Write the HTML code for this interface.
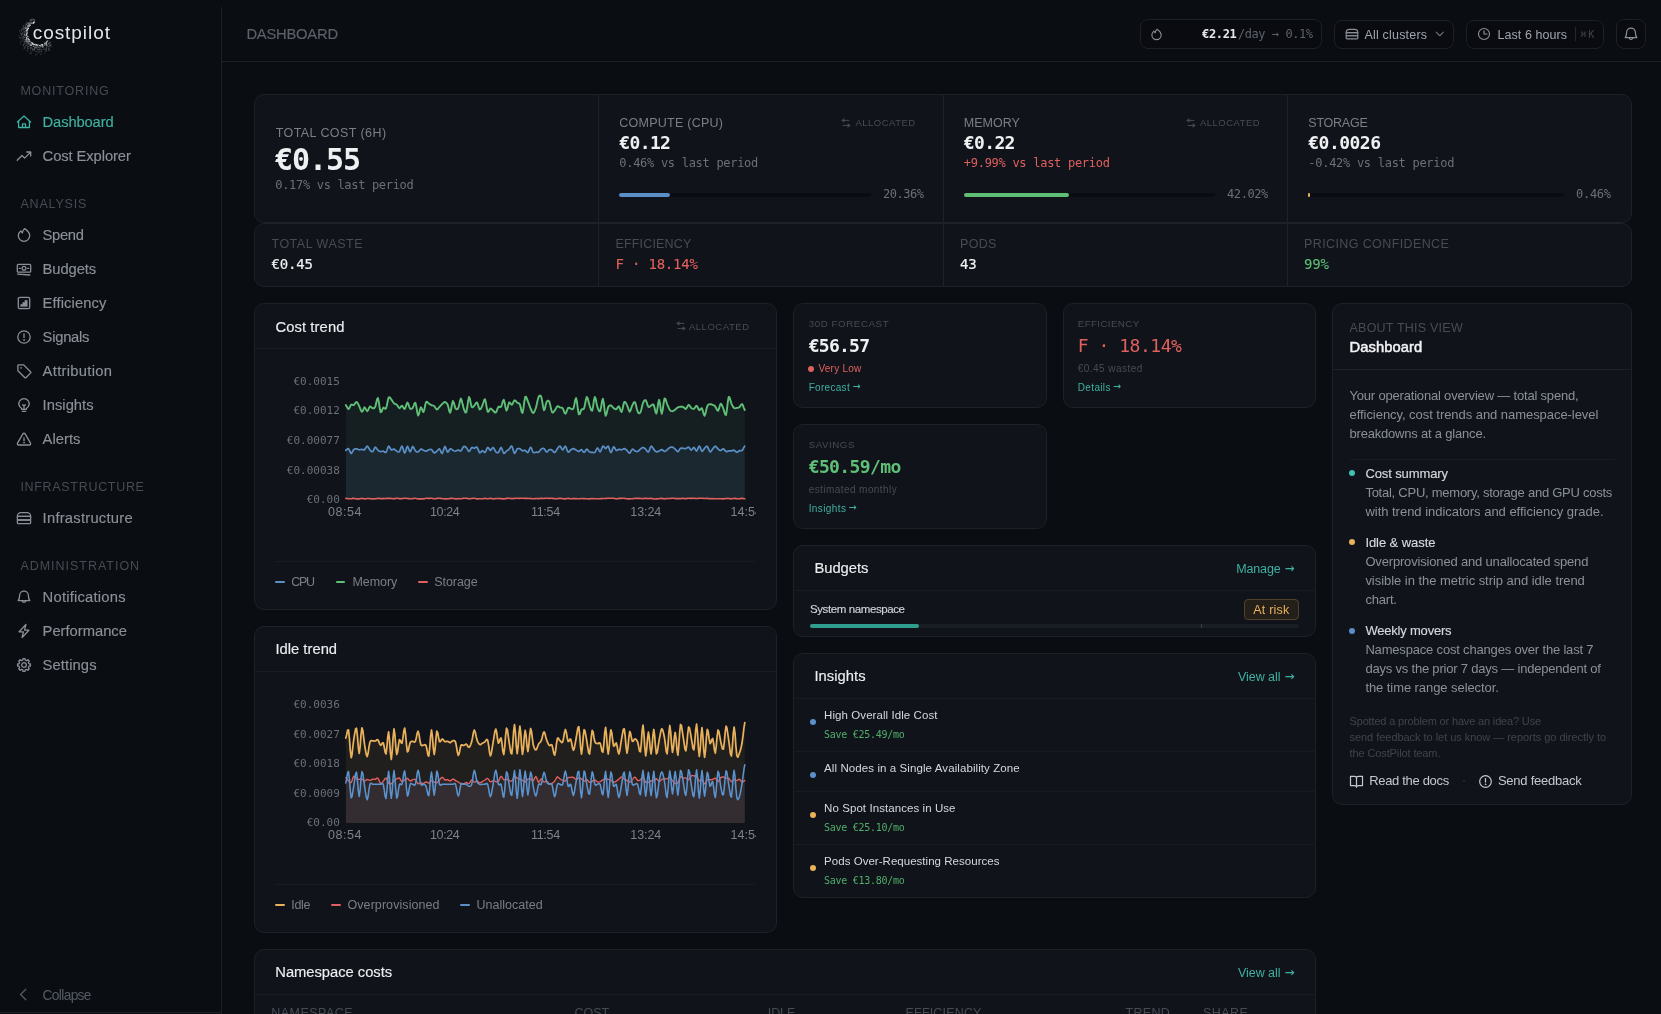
<!DOCTYPE html>
<html lang="en">
<head>
<meta charset="utf-8">
<title>CostPilot — Dashboard</title>
<style>
*{box-sizing:border-box;margin:0;padding:0}
html,body{width:1661px;height:1014px;overflow:hidden;background:#0a0d12;color:#e6e8eb;
  font-family:"Liberation Sans",sans-serif}
body{position:relative}
.m{font-family:"DejaVu Sans Mono","Liberation Mono",monospace}
#root{position:absolute;left:0;top:0;width:1661px;height:1014px;will-change:transform}
.abs{position:absolute}
.card{position:absolute;background:#10131a;border:1px solid #1d2128;border-radius:10px}
.t{position:absolute;white-space:nowrap;line-height:1}
.p{position:absolute;white-space:nowrap}
</style>
</head>
<body>
<div id="root">
<div class="abs" style="left:221px;top:7px;width:1px;height:1007px;background:#1c2027;"></div>
<div class="t" style="left:32.7px;top:23px;font-size:19px;color:#e4e6e9;letter-spacing:0.95px;">costpilot</div>
<div class="t" style="left:20.4px;top:85px;font-size:12.5px;color:#474c54;letter-spacing:0.82px;">MONITORING</div>
<div class="t" style="left:20.4px;top:198px;font-size:12.5px;color:#474c54;letter-spacing:0.83px;">ANALYSIS</div>
<div class="t" style="left:20.4px;top:481px;font-size:12.5px;color:#474c54;letter-spacing:0.69px;">INFRASTRUCTURE</div>
<div class="t" style="left:20.4px;top:560px;font-size:12.5px;color:#474c54;letter-spacing:0.98px;">ADMINISTRATION</div>
<div class="t" style="left:42.6px;top:115px;font-size:14.75px;color:#3fb0a1;letter-spacing:-0.14px;-webkit-text-stroke:0.15px #3fb0a1;">Dashboard</div>
<div class="t" style="left:42.6px;top:149px;font-size:14.75px;color:#8b9098;letter-spacing:-0.09px;-webkit-text-stroke:0.15px #8b9098;">Cost Explorer</div>
<div class="t" style="left:42.6px;top:228px;font-size:14.75px;color:#8b9098;letter-spacing:-0.34px;-webkit-text-stroke:0.15px #8b9098;">Spend</div>
<div class="t" style="left:42.6px;top:262px;font-size:14.75px;color:#8b9098;letter-spacing:-0.09px;-webkit-text-stroke:0.15px #8b9098;">Budgets</div>
<div class="t" style="left:42.6px;top:296px;font-size:14.75px;color:#8b9098;letter-spacing:0.11px;-webkit-text-stroke:0.15px #8b9098;">Efficiency</div>
<div class="t" style="left:42.6px;top:330px;font-size:14.75px;color:#8b9098;letter-spacing:-0.25px;-webkit-text-stroke:0.15px #8b9098;">Signals</div>
<div class="t" style="left:42.6px;top:364px;font-size:14.75px;color:#8b9098;letter-spacing:0.3px;-webkit-text-stroke:0.15px #8b9098;">Attribution</div>
<div class="t" style="left:42.6px;top:398px;font-size:14.75px;color:#8b9098;letter-spacing:0.02px;-webkit-text-stroke:0.15px #8b9098;">Insights</div>
<div class="t" style="left:42.6px;top:432px;font-size:14.75px;color:#8b9098;letter-spacing:0.04px;-webkit-text-stroke:0.15px #8b9098;">Alerts</div>
<div class="t" style="left:42.6px;top:511px;font-size:14.75px;color:#8b9098;letter-spacing:0.24px;-webkit-text-stroke:0.15px #8b9098;">Infrastructure</div>
<div class="t" style="left:42.6px;top:590px;font-size:14.75px;color:#8b9098;letter-spacing:0.22px;-webkit-text-stroke:0.15px #8b9098;">Notifications</div>
<div class="t" style="left:42.6px;top:624px;font-size:14.75px;color:#8b9098;letter-spacing:-0.01px;-webkit-text-stroke:0.15px #8b9098;">Performance</div>
<div class="t" style="left:42.6px;top:658px;font-size:14.75px;color:#8b9098;letter-spacing:0.09px;-webkit-text-stroke:0.15px #8b9098;">Settings</div>
<div class="t" style="left:42.6px;top:989px;font-size:13.75px;color:#565b63;letter-spacing:-0.66px;">Collapse</div>
<div class="abs" style="left:0px;top:1012px;width:221px;height:1px;background:#1c2027;"></div>
<div class="abs" style="left:222px;top:61px;width:1439px;height:1px;background:#1c2027;"></div>
<div class="t" style="left:246.4px;top:27px;font-size:14.75px;color:#5c6169;letter-spacing:-0.22px;-webkit-text-stroke:0.15px #5c6169;">DASHBOARD</div>
<div class="card" style="left:1140px;top:19px;width:182px;height:30px;background:#090b10;border-color:#1c2027;border-radius:8px"></div>
<div class="card" style="left:1334px;top:20px;width:120px;height:29px;background:#090b10;border-color:#1c2027;border-radius:8px"></div>
<div class="card" style="left:1466px;top:20px;width:138px;height:29px;background:#090b10;border-color:#1c2027;border-radius:8px"></div>
<div class="card" style="left:1616px;top:19px;width:30px;height:30px;background:#090b10;border-color:#1c2027;border-radius:8px"></div>
<div class="t m" style="left:1202.0px;top:28px;font-size:12px;color:#e6e8eb;font-weight:700;letter-spacing:-0.33px;">€2.21</div>
<div class="t m" style="left:1238.0px;top:28px;font-size:12px;color:#5c6169;letter-spacing:-0.45px;">/day → 0.1%</div>
<div class="t" style="left:1364.5px;top:29px;font-size:12.5px;color:#a0a5ad;letter-spacing:0.19px;">All clusters</div>
<div class="t" style="left:1497.5px;top:29px;font-size:12.5px;color:#a0a5ad;letter-spacing:0.06px;">Last 6 hours</div>
<div class="abs" style="left:1574.5px;top:27px;width:1px;height:14px;background:#23272e;"></div>
<div class="t m" style="left:1580.4px;top:30px;font-size:10px;color:#3f444c;letter-spacing:1.76px;">⌘K</div>
<div class="card" style="left:254px;top:94px;width:1378px;height:129px;"></div>
<div class="card" style="left:254px;top:223px;width:1378px;height:64px;"></div>
<div class="abs" style="left:598px;top:95px;width:1px;height:127px;background:#1d2128;"></div>
<div class="abs" style="left:598px;top:224px;width:1px;height:62px;background:#1d2128;"></div>
<div class="abs" style="left:943px;top:95px;width:1px;height:127px;background:#1d2128;"></div>
<div class="abs" style="left:943px;top:224px;width:1px;height:62px;background:#1d2128;"></div>
<div class="abs" style="left:1287px;top:95px;width:1px;height:127px;background:#1d2128;"></div>
<div class="abs" style="left:1287px;top:224px;width:1px;height:62px;background:#1d2128;"></div>
<div class="t" style="left:275.7px;top:127px;font-size:12.5px;color:#7a7f87;letter-spacing:0.43px;">TOTAL COST (6H)</div>
<div class="t m" style="left:275.0px;top:145px;font-size:30px;color:#eef0f2;font-weight:700;letter-spacing:-1.07px;">€0.55</div>
<div class="t m" style="left:275.3px;top:179px;font-size:12px;color:#6b7078;letter-spacing:-0.32px;">0.17% vs last period</div>
<div class="t" style="left:619.3px;top:117px;font-size:12.5px;color:#7a7f87;letter-spacing:0.25px;">COMPUTE (CPU)</div>
<div class="t m" style="left:619.3px;top:134px;font-size:18px;color:#eef0f2;font-weight:700;letter-spacing:-0.64px;">€0.12</div>
<div class="t m" style="left:619.3px;top:157px;font-size:12px;color:#6b7078;letter-spacing:-0.29px;">0.46% vs last period</div>
<div class="abs" style="left:619.3px;top:193px;width:251.6px;height:4px;border-radius:2px;background:#0a0c11"></div>
<div class="abs" style="left:619.3px;top:193px;width:51.2px;height:4px;border-radius:2px;background:#5b8fc7"></div>
<div class="t m" style="left:882.9px;top:188px;font-size:12px;color:#6b7078;letter-spacing:-0.45px;">20.36%</div>
<div class="t" style="left:855.5px;top:118px;font-size:9.5px;color:#474c54;letter-spacing:0.48px;">ALLOCATED</div>
<div class="t" style="left:963.8px;top:117px;font-size:12.5px;color:#7a7f87;">MEMORY</div>
<div class="t m" style="left:963.8px;top:134px;font-size:18px;color:#eef0f2;font-weight:700;letter-spacing:-0.64px;">€0.22</div>
<div class="t m" style="left:963.8px;top:157px;font-size:12px;color:#e0605e;letter-spacing:-0.28px;">+9.99% vs last period</div>
<div class="abs" style="left:963.8px;top:193px;width:251.3px;height:4px;border-radius:2px;background:#0a0c11"></div>
<div class="abs" style="left:963.8px;top:193px;width:105.6px;height:4px;border-radius:2px;background:#5fbf77"></div>
<div class="t m" style="left:1227.1px;top:188px;font-size:12px;color:#6b7078;letter-spacing:-0.45px;">42.02%</div>
<div class="t" style="left:1200.0px;top:118px;font-size:9.5px;color:#474c54;letter-spacing:0.48px;">ALLOCATED</div>
<div class="t" style="left:1308.3px;top:117px;font-size:12.5px;color:#7a7f87;letter-spacing:-0.23px;">STORAGE</div>
<div class="t m" style="left:1308.3px;top:134px;font-size:18px;color:#eef0f2;font-weight:700;letter-spacing:-0.53px;">€0.0026</div>
<div class="t m" style="left:1308.3px;top:157px;font-size:12px;color:#6b7078;letter-spacing:-0.28px;">-0.42% vs last period</div>
<div class="abs" style="left:1308.3px;top:193px;width:255.7px;height:4px;border-radius:2px;background:#0a0c11"></div>
<div class="abs" style="left:1308.3px;top:193px;width:1.5px;height:4px;border-radius:2px;background:#e8b15a"></div>
<div class="t m" style="left:1576.0px;top:188px;font-size:12px;color:#6b7078;letter-spacing:-0.28px;">0.46%</div>
<div class="t" style="left:271.5px;top:238px;font-size:12.5px;color:#474c54;letter-spacing:0.49px;">TOTAL WASTE</div>
<div class="t m" style="left:271.5px;top:257px;font-size:14px;color:#eef0f2;letter-spacing:-0.2px;-webkit-text-stroke:0.2px #eef0f2;">€0.45</div>
<div class="t" style="left:615.5px;top:238px;font-size:12.5px;color:#474c54;letter-spacing:0.17px;">EFFICIENCY</div>
<div class="t m" style="left:615.5px;top:257px;font-size:14px;color:#e0605e;letter-spacing:-0.2px;-webkit-text-stroke:0.1px #e0605e;">F · 18.14%</div>
<div class="t" style="left:960.0px;top:238px;font-size:12.5px;color:#474c54;letter-spacing:0.29px;">PODS</div>
<div class="t m" style="left:960.0px;top:257px;font-size:14px;color:#eef0f2;letter-spacing:-0.2px;-webkit-text-stroke:0.2px #eef0f2;">43</div>
<div class="t" style="left:1304.0px;top:238px;font-size:12.5px;color:#474c54;letter-spacing:0.39px;">PRICING CONFIDENCE</div>
<div class="t m" style="left:1304.0px;top:257px;font-size:14px;color:#5fbf77;letter-spacing:-0.2px;-webkit-text-stroke:0.1px #5fbf77;">99%</div>
<div class="card" style="left:254px;top:303px;width:523px;height:307px;"></div>
<div class="card" style="left:254px;top:626px;width:523px;height:307px;"></div>
<div class="card" style="left:793px;top:303px;width:254px;height:105px;"></div>
<div class="card" style="left:1063px;top:303px;width:253px;height:105px;"></div>
<div class="card" style="left:793px;top:424px;width:254px;height:105px;"></div>
<div class="card" style="left:793px;top:545px;width:523px;height:92px;"></div>
<div class="card" style="left:793px;top:653px;width:523px;height:245px;"></div>
<div class="card" style="left:1332px;top:303px;width:300px;height:502px;"></div>
<div class="card" style="left:254px;top:949px;width:1062px;height:80px;border-bottom-left-radius:0;border-bottom-right-radius:0"></div>
<svg class="abs" style="left:275px;top:360px;overflow:hidden" width="481" height="190" viewBox="275 360 481 190"><polygon fill="rgba(95,191,119,0.075)" points="345.8,405.0 346.7,406.4 347.6,408.2 348.5,409.1 349.4,408.0 350.3,406.1 351.2,404.6 352.0,404.5 352.9,405.0 353.8,405.1 354.7,404.0 355.6,402.6 356.5,401.9 357.4,402.7 358.3,404.3 359.2,406.1 360.1,408.3 361.0,410.6 361.9,411.8 362.8,410.8 363.7,408.6 364.5,407.3 365.4,408.3 366.3,410.2 367.2,411.2 368.1,410.1 369.0,408.0 369.9,406.5 370.8,406.7 371.7,407.6 372.6,408.2 373.5,408.3 374.4,408.0 375.3,406.8 376.1,403.6 377.0,399.5 377.9,398.0 378.8,401.7 379.7,408.0 380.6,412.2 381.5,411.9 382.4,409.4 383.3,407.6 384.2,408.0 385.1,408.9 386.0,408.5 386.9,405.2 387.8,400.6 388.6,397.5 389.5,397.1 390.4,398.2 391.3,399.4 392.2,400.7 393.1,402.1 394.0,403.3 394.9,403.8 395.8,404.1 396.7,404.6 397.6,405.8 398.5,407.3 399.4,408.2 400.2,407.6 401.1,406.3 402.0,405.7 402.9,406.7 403.8,408.4 404.7,409.0 405.6,407.1 406.5,404.2 407.4,402.6 408.3,403.9 409.2,406.6 410.1,408.6 411.0,409.0 411.9,408.6 412.7,407.8 413.6,405.8 414.5,403.3 415.4,402.7 416.3,406.4 417.2,412.2 418.1,415.5 419.0,413.8 419.9,409.8 420.8,407.2 421.7,408.4 422.6,411.0 423.5,412.0 424.4,409.4 425.2,405.1 426.1,402.1 427.0,401.7 427.9,402.6 428.8,403.5 429.7,404.1 430.6,404.7 431.5,405.2 432.4,405.4 433.3,405.6 434.2,406.0 435.1,407.2 436.0,408.7 436.8,409.5 437.7,409.1 438.6,408.0 439.5,406.9 440.4,405.9 441.3,404.9 442.2,404.0 443.1,403.1 444.0,402.3 444.9,402.0 445.8,402.3 446.7,403.2 447.6,404.6 448.5,407.6 449.3,411.2 450.2,412.7 451.1,409.6 452.0,404.2 452.9,401.0 453.8,402.4 454.7,405.9 455.6,408.6 456.5,409.3 457.4,409.1 458.3,408.0 459.2,404.8 460.1,400.6 460.9,398.6 461.8,400.6 462.7,404.6 463.6,408.1 464.5,410.6 465.4,412.6 466.3,412.4 467.2,407.8 468.1,400.9 469.0,396.9 469.9,398.8 470.8,403.5 471.7,406.9 472.6,407.4 473.4,406.6 474.3,405.6 475.2,404.3 476.1,402.8 477.0,402.4 477.9,404.4 478.8,407.6 479.7,409.5 480.6,409.1 481.5,407.3 482.4,405.3 483.3,402.8 484.2,400.0 485.0,399.2 485.9,402.6 486.8,408.1 487.7,411.8 488.6,411.7 489.5,409.8 490.4,408.5 491.3,408.8 492.2,409.7 493.1,410.5 494.0,411.5 494.9,412.5 495.8,412.6 496.7,411.0 497.5,408.6 498.4,406.8 499.3,406.7 500.2,407.1 501.1,406.8 502.0,404.3 502.9,401.0 503.8,399.8 504.7,402.8 505.6,407.8 506.5,410.6 507.4,408.9 508.3,405.1 509.1,402.4 510.0,402.7 510.9,404.1 511.8,404.8 512.7,403.6 513.6,401.6 514.5,400.3 515.4,400.6 516.3,401.7 517.2,402.7 518.1,403.1 519.0,403.3 519.9,404.4 520.8,407.7 521.6,411.7 522.5,413.1 523.4,408.7 524.3,401.7 525.2,396.9 526.1,396.8 527.0,398.9 527.9,401.4 528.8,403.6 529.7,406.2 530.6,408.5 531.5,410.5 532.4,412.3 533.2,413.0 534.1,412.2 535.0,410.3 535.9,407.8 536.8,404.2 537.7,399.9 538.6,396.9 539.5,395.6 540.4,395.5 541.3,396.9 542.2,401.1 543.1,406.9 544.0,410.2 544.9,408.7 545.7,404.8 546.6,401.9 547.5,400.8 548.4,400.6 549.3,401.6 550.2,404.8 551.1,409.1 552.0,412.1 552.9,412.6 553.8,411.7 554.7,410.6 555.6,409.1 556.5,407.4 557.4,406.2 558.2,406.3 559.1,406.9 560.0,407.5 560.9,407.6 561.8,407.6 562.7,408.2 563.6,410.1 564.5,412.6 565.4,413.8 566.3,412.4 567.2,409.8 568.1,407.9 569.0,407.6 569.8,408.1 570.7,408.6 571.6,409.0 572.5,409.4 573.4,408.6 574.3,404.9 575.2,400.0 576.1,398.1 577.0,402.3 577.9,409.5 578.8,414.3 579.7,414.1 580.6,411.6 581.5,409.4 582.3,409.2 583.2,409.3 584.1,408.3 585.0,404.5 585.9,399.6 586.8,396.9 587.7,398.3 588.6,401.9 589.5,405.2 590.4,407.9 591.3,410.4 592.2,410.7 593.1,406.6 593.9,400.4 594.8,396.9 595.7,398.8 596.6,403.5 597.5,407.4 598.4,409.7 599.3,411.3 600.2,411.1 601.1,407.1 602.0,401.4 602.9,398.8 603.8,403.2 604.7,410.9 605.6,415.7 606.4,414.5 607.3,410.4 608.2,407.1 609.1,405.9 610.0,405.4 610.9,405.4 611.8,406.0 612.7,407.1 613.6,408.1 614.5,408.7 615.4,409.2 616.3,409.2 617.2,408.2 618.0,406.8 618.9,406.3 619.8,408.2 620.7,410.9 621.6,412.0 622.5,409.3 623.4,404.8 624.3,401.9 625.2,401.9 626.1,403.3 627.0,405.1 627.9,407.5 628.8,410.3 629.7,411.7 630.5,410.4 631.4,407.7 632.3,405.4 633.2,403.6 634.1,402.1 635.0,402.1 635.9,404.7 636.8,408.8 637.7,411.8 638.6,413.1 639.5,413.3 640.4,412.4 641.3,409.8 642.1,405.9 643.0,402.9 643.9,401.1 644.8,400.1 645.7,400.2 646.6,402.0 647.5,404.9 648.4,406.9 649.3,407.0 650.2,406.2 651.1,405.5 652.0,404.9 652.9,404.4 653.8,405.0 654.6,408.0 655.5,412.0 656.4,413.5 657.3,409.6 658.2,403.1 659.1,399.8 660.0,403.5 660.9,410.3 661.8,413.8 662.7,410.1 663.6,403.2 664.5,398.5 665.4,398.8 666.2,401.3 667.1,404.0 668.0,406.1 668.9,408.2 669.8,409.9 670.7,410.8 671.6,411.1 672.5,411.2 673.4,410.9 674.3,410.3 675.2,409.6 676.1,408.8 677.0,408.0 677.9,407.4 678.7,407.0 679.6,406.9 680.5,406.8 681.4,406.7 682.3,406.7 683.2,407.0 684.1,407.7 685.0,408.7 685.9,409.0 686.8,407.8 687.7,406.0 688.6,404.9 689.5,405.5 690.4,406.8 691.2,408.0 692.1,408.5 693.0,408.9 693.9,408.8 694.8,407.8 695.7,406.4 696.6,405.8 697.5,406.9 698.4,408.9 699.3,410.2 700.2,409.7 701.1,408.5 702.0,408.3 702.8,410.7 703.7,414.2 704.6,415.7 705.5,413.4 706.4,409.3 707.3,406.0 708.2,404.7 709.1,404.4 710.0,404.2 710.9,404.2 711.8,404.5 712.7,404.9 713.6,405.2 714.5,405.7 715.3,406.5 716.2,408.2 717.1,410.1 718.0,410.8 718.9,408.9 719.8,405.6 720.7,403.7 721.6,404.5 722.5,406.5 723.4,408.7 724.3,411.6 725.2,414.6 726.1,414.9 726.9,409.8 727.8,402.0 728.7,396.9 729.6,397.4 730.5,400.6 731.4,403.6 732.3,405.4 733.2,407.0 734.1,408.0 735.0,408.4 735.9,408.2 736.8,407.9 737.7,407.8 738.6,407.6 739.4,407.2 740.3,405.9 741.2,404.5 742.1,404.0 743.0,405.5 743.9,408.1 744.8,410.0 744.8,499.3 345.8,499.3"/><polygon fill="rgba(91,143,199,0.085)" points="345.8,450.3 346.7,449.7 347.6,448.8 348.5,448.7 349.4,450.1 350.3,452.3 351.2,453.5 352.0,452.7 352.9,450.9 353.8,449.5 354.7,449.0 355.6,448.8 356.5,448.8 357.4,449.0 358.3,449.5 359.2,449.8 360.1,449.7 361.0,449.5 361.9,449.4 362.8,449.6 363.7,449.9 364.5,449.8 365.4,448.6 366.3,446.9 367.2,446.1 368.1,446.9 369.0,448.5 369.9,449.9 370.8,450.9 371.7,451.7 372.6,451.7 373.5,450.4 374.4,448.3 375.3,447.1 376.1,447.7 377.0,449.0 377.9,450.2 378.8,450.9 379.7,451.3 380.6,451.6 381.5,451.5 382.4,451.2 383.3,451.1 384.2,451.7 385.1,452.5 386.0,452.4 386.9,450.5 387.8,447.7 388.6,446.1 389.5,446.8 390.4,448.6 391.3,449.9 392.2,449.9 393.1,449.3 394.0,449.1 394.9,449.6 395.8,450.5 396.7,451.1 397.6,451.7 398.5,452.0 399.4,451.7 400.2,449.8 401.1,447.3 402.0,446.1 402.9,448.0 403.8,451.3 404.7,453.0 405.6,451.4 406.5,448.2 407.4,446.3 408.3,447.7 409.2,450.3 410.1,451.8 411.0,450.5 411.9,448.0 412.7,446.5 413.6,447.3 414.5,449.2 415.4,450.8 416.3,451.6 417.2,452.0 418.1,451.9 419.0,451.1 419.9,449.9 420.8,449.1 421.7,449.2 422.6,449.8 423.5,450.3 424.4,450.7 425.2,451.1 426.1,451.2 427.0,450.9 427.9,450.3 428.8,449.8 429.7,449.5 430.6,449.4 431.5,449.6 432.4,450.6 433.3,452.0 434.2,452.8 435.1,452.7 436.0,452.0 436.8,451.2 437.7,450.3 438.6,449.2 439.5,448.9 440.4,450.4 441.3,452.6 442.2,453.5 443.1,451.5 444.0,448.3 444.9,446.5 445.8,447.8 446.7,450.5 447.6,452.2 448.5,451.6 449.3,449.9 450.2,448.8 451.1,448.9 452.0,449.6 452.9,450.3 453.8,450.7 454.7,451.0 455.6,451.1 456.5,450.8 457.4,450.3 458.3,450.0 459.2,450.4 460.1,451.0 460.9,451.0 461.8,449.7 462.7,447.9 463.6,446.6 464.5,446.4 465.4,446.8 466.3,447.5 467.2,448.9 468.1,450.6 469.0,451.5 469.9,450.6 470.8,448.8 471.7,447.6 472.6,447.5 473.4,448.0 474.3,448.2 475.2,447.8 476.1,447.2 477.0,447.2 477.9,448.9 478.8,451.3 479.7,452.8 480.6,452.5 481.5,451.4 482.4,450.7 483.3,451.2 484.2,452.2 485.0,452.5 485.9,451.0 486.8,448.8 487.7,447.4 488.6,448.0 489.5,449.5 490.4,450.3 491.3,449.5 492.2,448.1 493.1,447.5 494.0,448.5 494.9,450.3 495.8,451.8 496.7,452.5 497.5,452.8 498.4,452.5 499.3,450.9 500.2,448.6 501.1,447.5 502.0,448.9 502.9,451.6 503.8,453.3 504.7,453.1 505.6,452.0 506.5,451.0 507.4,450.4 508.3,449.9 509.1,449.2 510.0,447.9 510.9,446.4 511.8,446.1 512.7,448.2 513.6,451.4 514.5,453.3 515.4,452.5 516.3,450.5 517.2,448.9 518.1,448.5 519.0,448.5 519.9,448.8 520.8,449.4 521.6,450.2 522.5,450.8 523.4,450.7 524.3,450.4 525.2,450.4 526.1,451.2 527.0,452.3 527.9,452.6 528.8,451.0 529.7,448.5 530.6,447.3 531.5,448.4 532.4,450.8 533.2,452.5 534.1,452.8 535.0,452.5 535.9,452.2 536.8,452.2 537.7,452.4 538.6,452.2 539.5,451.2 540.4,450.0 541.3,449.0 542.2,448.5 543.1,448.3 544.0,448.5 544.9,449.6 545.7,451.2 546.6,452.0 547.5,451.6 548.4,450.4 549.3,449.6 550.2,449.5 551.1,449.7 552.0,450.1 552.9,451.0 553.8,452.1 554.7,452.5 555.6,451.7 556.5,450.1 557.4,448.7 558.2,447.5 559.1,446.5 560.0,446.1 560.9,447.2 561.8,449.0 562.7,449.9 563.6,448.9 564.5,447.0 565.4,446.2 566.3,447.7 567.2,450.4 568.1,452.1 569.0,452.0 569.8,450.9 570.7,450.0 571.6,449.3 572.5,448.8 573.4,448.6 574.3,448.9 575.2,449.4 576.1,450.0 577.0,450.6 577.9,451.2 578.8,451.4 579.7,450.9 580.6,450.0 581.5,449.6 582.3,450.5 583.2,451.8 584.1,452.4 585.0,451.6 585.9,450.0 586.8,449.2 587.7,449.7 588.6,451.0 589.5,452.0 590.4,452.2 591.3,452.3 592.2,452.3 593.1,452.5 593.9,452.7 594.8,452.4 595.7,451.0 596.6,449.0 597.5,448.0 598.4,449.0 599.3,451.0 600.2,451.9 601.1,450.4 602.0,447.8 602.9,446.1 603.8,446.5 604.7,447.7 605.6,448.5 606.4,447.8 607.3,446.5 608.2,446.2 609.1,448.2 610.0,451.1 610.9,452.6 611.8,451.2 612.7,448.5 613.6,446.8 614.5,447.5 615.4,449.2 616.3,450.4 617.2,450.3 618.0,449.7 618.9,449.3 619.8,449.4 620.7,449.7 621.6,449.8 622.5,449.5 623.4,448.9 624.3,448.6 625.2,449.0 626.1,449.7 627.0,450.5 627.9,451.6 628.8,452.7 629.7,453.2 630.5,452.1 631.4,450.4 632.3,449.2 633.2,449.4 634.1,450.2 635.0,451.0 635.9,451.3 636.8,451.6 637.7,451.5 638.6,450.9 639.5,449.9 640.4,449.1 641.3,448.4 642.1,447.7 643.0,447.5 643.9,447.8 644.8,448.4 645.7,449.2 646.6,450.4 647.5,451.7 648.4,452.0 649.3,450.4 650.2,447.8 651.1,446.2 652.0,446.6 652.9,448.0 653.8,449.4 654.6,450.4 655.5,451.3 656.4,451.8 657.3,451.8 658.2,451.4 659.1,450.9 660.0,450.4 660.9,449.8 661.8,449.6 662.7,450.1 663.6,450.9 664.5,451.4 665.4,451.2 666.2,450.5 667.1,449.8 668.0,449.0 668.9,448.1 669.8,447.5 670.7,447.2 671.6,447.1 672.5,447.2 673.4,447.6 674.3,448.3 675.2,449.1 676.1,450.1 677.0,451.3 677.9,451.7 678.7,450.9 679.6,449.4 680.5,448.3 681.4,448.1 682.3,448.2 683.2,448.3 684.1,448.5 685.0,448.6 685.9,448.6 686.8,448.0 687.7,447.3 688.6,447.1 689.5,448.0 690.4,449.4 691.2,450.1 692.1,449.4 693.0,448.1 693.9,447.4 694.8,448.5 695.7,450.2 696.6,451.0 697.5,449.6 698.4,447.3 699.3,446.1 700.2,447.4 701.1,449.9 702.0,451.4 702.8,450.9 703.7,449.5 704.6,448.2 705.5,447.2 706.4,446.4 707.3,446.3 708.2,448.0 709.1,450.4 710.0,451.9 710.9,451.5 711.8,450.2 712.7,448.8 713.6,447.7 714.5,446.6 715.3,446.1 716.2,446.7 717.1,447.9 718.0,448.9 718.9,449.7 719.8,450.3 720.7,450.5 721.6,450.0 722.5,449.1 723.4,448.8 724.3,449.5 725.2,450.7 726.1,451.5 726.9,451.6 727.8,451.2 728.7,450.9 729.6,450.9 730.5,450.9 731.4,450.9 732.3,450.6 733.2,450.3 734.1,450.2 735.0,450.9 735.9,451.8 736.8,452.3 737.7,452.0 738.6,451.2 739.4,450.6 740.3,450.6 741.2,450.8 742.1,450.5 743.0,449.2 743.9,447.4 744.8,446.1 744.8,499.3 345.8,499.3"/><polygon fill="rgba(224,96,94,0.1)" points="345.8,498.4 346.7,498.5 347.6,498.6 348.5,498.8 349.4,498.8 350.3,498.8 351.2,498.7 352.0,498.6 352.9,498.4 353.8,498.4 354.7,498.5 355.6,498.7 356.5,498.9 357.4,498.9 358.3,499.0 359.2,498.9 360.1,498.8 361.0,498.5 361.9,498.4 362.8,498.5 363.7,498.8 364.5,498.9 365.4,498.8 366.3,498.7 367.2,498.5 368.1,498.5 369.0,498.5 369.9,498.6 370.8,498.7 371.7,498.8 372.6,498.9 373.5,499.0 374.4,498.9 375.3,498.8 376.1,498.7 377.0,498.5 377.9,498.4 378.8,498.4 379.7,498.5 380.6,498.6 381.5,498.6 382.4,498.6 383.3,498.6 384.2,498.6 385.1,498.5 386.0,498.5 386.9,498.4 387.8,498.4 388.6,498.4 389.5,498.4 390.4,498.4 391.3,498.5 392.2,498.6 393.1,498.7 394.0,498.8 394.9,498.6 395.8,498.4 396.7,498.3 397.6,498.3 398.5,498.5 399.4,498.6 400.2,498.7 401.1,498.6 402.0,498.6 402.9,498.5 403.8,498.3 404.7,498.3 405.6,498.3 406.5,498.4 407.4,498.5 408.3,498.6 409.2,498.6 410.1,498.7 411.0,498.7 411.9,498.7 412.7,498.6 413.6,498.5 414.5,498.3 415.4,498.3 416.3,498.5 417.2,498.7 418.1,498.9 419.0,498.9 419.9,498.9 420.8,498.8 421.7,498.9 422.6,498.9 423.5,498.9 424.4,498.8 425.2,498.5 426.1,498.3 427.0,498.3 427.9,498.4 428.8,498.4 429.7,498.4 430.6,498.3 431.5,498.3 432.4,498.4 433.3,498.7 434.2,498.8 435.1,498.7 436.0,498.6 436.8,498.4 437.7,498.4 438.6,498.3 439.5,498.3 440.4,498.4 441.3,498.5 442.2,498.5 443.1,498.7 444.0,498.8 444.9,498.9 445.8,498.9 446.7,498.9 447.6,498.8 448.5,498.7 449.3,498.6 450.2,498.4 451.1,498.4 452.0,498.3 452.9,498.4 453.8,498.5 454.7,498.7 455.6,498.9 456.5,498.9 457.4,498.7 458.3,498.6 459.2,498.7 460.1,498.7 460.9,498.7 461.8,498.6 462.7,498.4 463.6,498.3 464.5,498.3 465.4,498.2 466.3,498.3 467.2,498.4 468.1,498.6 469.0,498.7 469.9,498.7 470.8,498.6 471.7,498.5 472.6,498.4 473.4,498.3 474.3,498.3 475.2,498.5 476.1,498.7 477.0,498.9 477.9,498.9 478.8,498.8 479.7,498.7 480.6,498.7 481.5,498.8 482.4,498.8 483.3,498.7 484.2,498.4 485.0,498.3 485.9,498.5 486.8,498.7 487.7,498.8 488.6,498.7 489.5,498.4 490.4,498.3 491.3,498.4 492.2,498.7 493.1,498.9 494.0,498.8 494.9,498.7 495.8,498.6 496.7,498.5 497.5,498.5 498.4,498.5 499.3,498.5 500.2,498.6 501.1,498.6 502.0,498.7 502.9,498.9 503.8,498.9 504.7,498.8 505.6,498.6 506.5,498.4 507.4,498.4 508.3,498.3 509.1,498.3 510.0,498.4 510.9,498.5 511.8,498.6 512.7,498.6 513.6,498.5 514.5,498.4 515.4,498.4 516.3,498.3 517.2,498.3 518.1,498.3 519.0,498.4 519.9,498.4 520.8,498.3 521.6,498.3 522.5,498.3 523.4,498.3 524.3,498.4 525.2,498.4 526.1,498.4 527.0,498.4 527.9,498.5 528.8,498.5 529.7,498.4 530.6,498.5 531.5,498.6 532.4,498.7 533.2,498.8 534.1,498.7 535.0,498.6 535.9,498.5 536.8,498.5 537.7,498.6 538.6,498.6 539.5,498.5 540.4,498.4 541.3,498.4 542.2,498.4 543.1,498.5 544.0,498.5 544.9,498.4 545.7,498.3 546.6,498.3 547.5,498.3 548.4,498.4 549.3,498.4 550.2,498.4 551.1,498.3 552.0,498.3 552.9,498.4 553.8,498.6 554.7,498.8 555.6,498.8 556.5,498.7 557.4,498.6 558.2,498.5 559.1,498.4 560.0,498.4 560.9,498.4 561.8,498.5 562.7,498.6 563.6,498.7 564.5,498.9 565.4,498.9 566.3,498.7 567.2,498.5 568.1,498.3 569.0,498.4 569.8,498.7 570.7,498.8 571.6,498.8 572.5,498.6 573.4,498.6 574.3,498.5 575.2,498.6 576.1,498.6 577.0,498.7 577.9,498.8 578.8,498.8 579.7,498.8 580.6,498.6 581.5,498.5 582.3,498.5 583.2,498.6 584.1,498.6 585.0,498.6 585.9,498.7 586.8,498.7 587.7,498.8 588.6,498.9 589.5,498.9 590.4,498.8 591.3,498.6 592.2,498.5 593.1,498.6 593.9,498.7 594.8,498.8 595.7,498.8 596.6,498.8 597.5,498.7 598.4,498.7 599.3,498.7 600.2,498.7 601.1,498.6 602.0,498.6 602.9,498.5 603.8,498.5 604.7,498.5 605.6,498.5 606.4,498.4 607.3,498.3 608.2,498.3 609.1,498.3 610.0,498.3 610.9,498.3 611.8,498.3 612.7,498.3 613.6,498.3 614.5,498.4 615.4,498.7 616.3,498.8 617.2,498.7 618.0,498.6 618.9,498.4 619.8,498.4 620.7,498.4 621.6,498.4 622.5,498.3 623.4,498.3 624.3,498.3 625.2,498.5 626.1,498.7 627.0,498.8 627.9,498.9 628.8,498.9 629.7,498.9 630.5,498.8 631.4,498.8 632.3,498.7 633.2,498.6 634.1,498.5 635.0,498.4 635.9,498.4 636.8,498.4 637.7,498.4 638.6,498.4 639.5,498.4 640.4,498.5 641.3,498.5 642.1,498.6 643.0,498.6 643.9,498.5 644.8,498.4 645.7,498.4 646.6,498.4 647.5,498.5 648.4,498.6 649.3,498.5 650.2,498.4 651.1,498.4 652.0,498.6 652.9,498.8 653.8,498.9 654.6,499.0 655.5,499.0 656.4,498.9 657.3,498.9 658.2,498.7 659.1,498.6 660.0,498.5 660.9,498.4 661.8,498.4 662.7,498.6 663.6,498.8 664.5,498.9 665.4,498.8 666.2,498.6 667.1,498.5 668.0,498.5 668.9,498.5 669.8,498.5 670.7,498.4 671.6,498.3 672.5,498.3 673.4,498.3 674.3,498.4 675.2,498.5 676.1,498.6 677.0,498.6 677.9,498.6 678.7,498.6 679.6,498.6 680.5,498.6 681.4,498.5 682.3,498.4 683.2,498.4 684.1,498.5 685.0,498.6 685.9,498.6 686.8,498.5 687.7,498.4 688.6,498.3 689.5,498.3 690.4,498.4 691.2,498.4 692.1,498.4 693.0,498.3 693.9,498.3 694.8,498.4 695.7,498.5 696.6,498.5 697.5,498.5 698.4,498.4 699.3,498.3 700.2,498.2 701.1,498.2 702.0,498.3 702.8,498.3 703.7,498.4 704.6,498.5 705.5,498.5 706.4,498.4 707.3,498.4 708.2,498.5 709.1,498.6 710.0,498.7 710.9,498.7 711.8,498.6 712.7,498.6 713.6,498.7 714.5,498.7 715.3,498.8 716.2,498.8 717.1,498.7 718.0,498.7 718.9,498.7 719.8,498.7 720.7,498.8 721.6,498.8 722.5,498.9 723.4,498.9 724.3,498.8 725.2,498.6 726.1,498.5 726.9,498.5 727.8,498.4 728.7,498.5 729.6,498.6 730.5,498.8 731.4,498.9 732.3,498.8 733.2,498.5 734.1,498.4 735.0,498.4 735.9,498.6 736.8,498.8 737.7,498.8 738.6,498.8 739.4,498.7 740.3,498.6 741.2,498.4 742.1,498.3 743.0,498.4 743.9,498.7 744.8,498.8 744.8,499.3 345.8,499.3"/><polyline fill="none" stroke="#5fbf77" stroke-width="1.9" stroke-linejoin="round" stroke-linecap="round" points="345.8,405.0 346.7,406.4 347.6,408.2 348.5,409.1 349.4,408.0 350.3,406.1 351.2,404.6 352.0,404.5 352.9,405.0 353.8,405.1 354.7,404.0 355.6,402.6 356.5,401.9 357.4,402.7 358.3,404.3 359.2,406.1 360.1,408.3 361.0,410.6 361.9,411.8 362.8,410.8 363.7,408.6 364.5,407.3 365.4,408.3 366.3,410.2 367.2,411.2 368.1,410.1 369.0,408.0 369.9,406.5 370.8,406.7 371.7,407.6 372.6,408.2 373.5,408.3 374.4,408.0 375.3,406.8 376.1,403.6 377.0,399.5 377.9,398.0 378.8,401.7 379.7,408.0 380.6,412.2 381.5,411.9 382.4,409.4 383.3,407.6 384.2,408.0 385.1,408.9 386.0,408.5 386.9,405.2 387.8,400.6 388.6,397.5 389.5,397.1 390.4,398.2 391.3,399.4 392.2,400.7 393.1,402.1 394.0,403.3 394.9,403.8 395.8,404.1 396.7,404.6 397.6,405.8 398.5,407.3 399.4,408.2 400.2,407.6 401.1,406.3 402.0,405.7 402.9,406.7 403.8,408.4 404.7,409.0 405.6,407.1 406.5,404.2 407.4,402.6 408.3,403.9 409.2,406.6 410.1,408.6 411.0,409.0 411.9,408.6 412.7,407.8 413.6,405.8 414.5,403.3 415.4,402.7 416.3,406.4 417.2,412.2 418.1,415.5 419.0,413.8 419.9,409.8 420.8,407.2 421.7,408.4 422.6,411.0 423.5,412.0 424.4,409.4 425.2,405.1 426.1,402.1 427.0,401.7 427.9,402.6 428.8,403.5 429.7,404.1 430.6,404.7 431.5,405.2 432.4,405.4 433.3,405.6 434.2,406.0 435.1,407.2 436.0,408.7 436.8,409.5 437.7,409.1 438.6,408.0 439.5,406.9 440.4,405.9 441.3,404.9 442.2,404.0 443.1,403.1 444.0,402.3 444.9,402.0 445.8,402.3 446.7,403.2 447.6,404.6 448.5,407.6 449.3,411.2 450.2,412.7 451.1,409.6 452.0,404.2 452.9,401.0 453.8,402.4 454.7,405.9 455.6,408.6 456.5,409.3 457.4,409.1 458.3,408.0 459.2,404.8 460.1,400.6 460.9,398.6 461.8,400.6 462.7,404.6 463.6,408.1 464.5,410.6 465.4,412.6 466.3,412.4 467.2,407.8 468.1,400.9 469.0,396.9 469.9,398.8 470.8,403.5 471.7,406.9 472.6,407.4 473.4,406.6 474.3,405.6 475.2,404.3 476.1,402.8 477.0,402.4 477.9,404.4 478.8,407.6 479.7,409.5 480.6,409.1 481.5,407.3 482.4,405.3 483.3,402.8 484.2,400.0 485.0,399.2 485.9,402.6 486.8,408.1 487.7,411.8 488.6,411.7 489.5,409.8 490.4,408.5 491.3,408.8 492.2,409.7 493.1,410.5 494.0,411.5 494.9,412.5 495.8,412.6 496.7,411.0 497.5,408.6 498.4,406.8 499.3,406.7 500.2,407.1 501.1,406.8 502.0,404.3 502.9,401.0 503.8,399.8 504.7,402.8 505.6,407.8 506.5,410.6 507.4,408.9 508.3,405.1 509.1,402.4 510.0,402.7 510.9,404.1 511.8,404.8 512.7,403.6 513.6,401.6 514.5,400.3 515.4,400.6 516.3,401.7 517.2,402.7 518.1,403.1 519.0,403.3 519.9,404.4 520.8,407.7 521.6,411.7 522.5,413.1 523.4,408.7 524.3,401.7 525.2,396.9 526.1,396.8 527.0,398.9 527.9,401.4 528.8,403.6 529.7,406.2 530.6,408.5 531.5,410.5 532.4,412.3 533.2,413.0 534.1,412.2 535.0,410.3 535.9,407.8 536.8,404.2 537.7,399.9 538.6,396.9 539.5,395.6 540.4,395.5 541.3,396.9 542.2,401.1 543.1,406.9 544.0,410.2 544.9,408.7 545.7,404.8 546.6,401.9 547.5,400.8 548.4,400.6 549.3,401.6 550.2,404.8 551.1,409.1 552.0,412.1 552.9,412.6 553.8,411.7 554.7,410.6 555.6,409.1 556.5,407.4 557.4,406.2 558.2,406.3 559.1,406.9 560.0,407.5 560.9,407.6 561.8,407.6 562.7,408.2 563.6,410.1 564.5,412.6 565.4,413.8 566.3,412.4 567.2,409.8 568.1,407.9 569.0,407.6 569.8,408.1 570.7,408.6 571.6,409.0 572.5,409.4 573.4,408.6 574.3,404.9 575.2,400.0 576.1,398.1 577.0,402.3 577.9,409.5 578.8,414.3 579.7,414.1 580.6,411.6 581.5,409.4 582.3,409.2 583.2,409.3 584.1,408.3 585.0,404.5 585.9,399.6 586.8,396.9 587.7,398.3 588.6,401.9 589.5,405.2 590.4,407.9 591.3,410.4 592.2,410.7 593.1,406.6 593.9,400.4 594.8,396.9 595.7,398.8 596.6,403.5 597.5,407.4 598.4,409.7 599.3,411.3 600.2,411.1 601.1,407.1 602.0,401.4 602.9,398.8 603.8,403.2 604.7,410.9 605.6,415.7 606.4,414.5 607.3,410.4 608.2,407.1 609.1,405.9 610.0,405.4 610.9,405.4 611.8,406.0 612.7,407.1 613.6,408.1 614.5,408.7 615.4,409.2 616.3,409.2 617.2,408.2 618.0,406.8 618.9,406.3 619.8,408.2 620.7,410.9 621.6,412.0 622.5,409.3 623.4,404.8 624.3,401.9 625.2,401.9 626.1,403.3 627.0,405.1 627.9,407.5 628.8,410.3 629.7,411.7 630.5,410.4 631.4,407.7 632.3,405.4 633.2,403.6 634.1,402.1 635.0,402.1 635.9,404.7 636.8,408.8 637.7,411.8 638.6,413.1 639.5,413.3 640.4,412.4 641.3,409.8 642.1,405.9 643.0,402.9 643.9,401.1 644.8,400.1 645.7,400.2 646.6,402.0 647.5,404.9 648.4,406.9 649.3,407.0 650.2,406.2 651.1,405.5 652.0,404.9 652.9,404.4 653.8,405.0 654.6,408.0 655.5,412.0 656.4,413.5 657.3,409.6 658.2,403.1 659.1,399.8 660.0,403.5 660.9,410.3 661.8,413.8 662.7,410.1 663.6,403.2 664.5,398.5 665.4,398.8 666.2,401.3 667.1,404.0 668.0,406.1 668.9,408.2 669.8,409.9 670.7,410.8 671.6,411.1 672.5,411.2 673.4,410.9 674.3,410.3 675.2,409.6 676.1,408.8 677.0,408.0 677.9,407.4 678.7,407.0 679.6,406.9 680.5,406.8 681.4,406.7 682.3,406.7 683.2,407.0 684.1,407.7 685.0,408.7 685.9,409.0 686.8,407.8 687.7,406.0 688.6,404.9 689.5,405.5 690.4,406.8 691.2,408.0 692.1,408.5 693.0,408.9 693.9,408.8 694.8,407.8 695.7,406.4 696.6,405.8 697.5,406.9 698.4,408.9 699.3,410.2 700.2,409.7 701.1,408.5 702.0,408.3 702.8,410.7 703.7,414.2 704.6,415.7 705.5,413.4 706.4,409.3 707.3,406.0 708.2,404.7 709.1,404.4 710.0,404.2 710.9,404.2 711.8,404.5 712.7,404.9 713.6,405.2 714.5,405.7 715.3,406.5 716.2,408.2 717.1,410.1 718.0,410.8 718.9,408.9 719.8,405.6 720.7,403.7 721.6,404.5 722.5,406.5 723.4,408.7 724.3,411.6 725.2,414.6 726.1,414.9 726.9,409.8 727.8,402.0 728.7,396.9 729.6,397.4 730.5,400.6 731.4,403.6 732.3,405.4 733.2,407.0 734.1,408.0 735.0,408.4 735.9,408.2 736.8,407.9 737.7,407.8 738.6,407.6 739.4,407.2 740.3,405.9 741.2,404.5 742.1,404.0 743.0,405.5 743.9,408.1 744.8,410.0"/><polyline fill="none" stroke="#5b8fc7" stroke-width="1.7" stroke-linejoin="round" stroke-linecap="round" points="345.8,450.3 346.7,449.7 347.6,448.8 348.5,448.7 349.4,450.1 350.3,452.3 351.2,453.5 352.0,452.7 352.9,450.9 353.8,449.5 354.7,449.0 355.6,448.8 356.5,448.8 357.4,449.0 358.3,449.5 359.2,449.8 360.1,449.7 361.0,449.5 361.9,449.4 362.8,449.6 363.7,449.9 364.5,449.8 365.4,448.6 366.3,446.9 367.2,446.1 368.1,446.9 369.0,448.5 369.9,449.9 370.8,450.9 371.7,451.7 372.6,451.7 373.5,450.4 374.4,448.3 375.3,447.1 376.1,447.7 377.0,449.0 377.9,450.2 378.8,450.9 379.7,451.3 380.6,451.6 381.5,451.5 382.4,451.2 383.3,451.1 384.2,451.7 385.1,452.5 386.0,452.4 386.9,450.5 387.8,447.7 388.6,446.1 389.5,446.8 390.4,448.6 391.3,449.9 392.2,449.9 393.1,449.3 394.0,449.1 394.9,449.6 395.8,450.5 396.7,451.1 397.6,451.7 398.5,452.0 399.4,451.7 400.2,449.8 401.1,447.3 402.0,446.1 402.9,448.0 403.8,451.3 404.7,453.0 405.6,451.4 406.5,448.2 407.4,446.3 408.3,447.7 409.2,450.3 410.1,451.8 411.0,450.5 411.9,448.0 412.7,446.5 413.6,447.3 414.5,449.2 415.4,450.8 416.3,451.6 417.2,452.0 418.1,451.9 419.0,451.1 419.9,449.9 420.8,449.1 421.7,449.2 422.6,449.8 423.5,450.3 424.4,450.7 425.2,451.1 426.1,451.2 427.0,450.9 427.9,450.3 428.8,449.8 429.7,449.5 430.6,449.4 431.5,449.6 432.4,450.6 433.3,452.0 434.2,452.8 435.1,452.7 436.0,452.0 436.8,451.2 437.7,450.3 438.6,449.2 439.5,448.9 440.4,450.4 441.3,452.6 442.2,453.5 443.1,451.5 444.0,448.3 444.9,446.5 445.8,447.8 446.7,450.5 447.6,452.2 448.5,451.6 449.3,449.9 450.2,448.8 451.1,448.9 452.0,449.6 452.9,450.3 453.8,450.7 454.7,451.0 455.6,451.1 456.5,450.8 457.4,450.3 458.3,450.0 459.2,450.4 460.1,451.0 460.9,451.0 461.8,449.7 462.7,447.9 463.6,446.6 464.5,446.4 465.4,446.8 466.3,447.5 467.2,448.9 468.1,450.6 469.0,451.5 469.9,450.6 470.8,448.8 471.7,447.6 472.6,447.5 473.4,448.0 474.3,448.2 475.2,447.8 476.1,447.2 477.0,447.2 477.9,448.9 478.8,451.3 479.7,452.8 480.6,452.5 481.5,451.4 482.4,450.7 483.3,451.2 484.2,452.2 485.0,452.5 485.9,451.0 486.8,448.8 487.7,447.4 488.6,448.0 489.5,449.5 490.4,450.3 491.3,449.5 492.2,448.1 493.1,447.5 494.0,448.5 494.9,450.3 495.8,451.8 496.7,452.5 497.5,452.8 498.4,452.5 499.3,450.9 500.2,448.6 501.1,447.5 502.0,448.9 502.9,451.6 503.8,453.3 504.7,453.1 505.6,452.0 506.5,451.0 507.4,450.4 508.3,449.9 509.1,449.2 510.0,447.9 510.9,446.4 511.8,446.1 512.7,448.2 513.6,451.4 514.5,453.3 515.4,452.5 516.3,450.5 517.2,448.9 518.1,448.5 519.0,448.5 519.9,448.8 520.8,449.4 521.6,450.2 522.5,450.8 523.4,450.7 524.3,450.4 525.2,450.4 526.1,451.2 527.0,452.3 527.9,452.6 528.8,451.0 529.7,448.5 530.6,447.3 531.5,448.4 532.4,450.8 533.2,452.5 534.1,452.8 535.0,452.5 535.9,452.2 536.8,452.2 537.7,452.4 538.6,452.2 539.5,451.2 540.4,450.0 541.3,449.0 542.2,448.5 543.1,448.3 544.0,448.5 544.9,449.6 545.7,451.2 546.6,452.0 547.5,451.6 548.4,450.4 549.3,449.6 550.2,449.5 551.1,449.7 552.0,450.1 552.9,451.0 553.8,452.1 554.7,452.5 555.6,451.7 556.5,450.1 557.4,448.7 558.2,447.5 559.1,446.5 560.0,446.1 560.9,447.2 561.8,449.0 562.7,449.9 563.6,448.9 564.5,447.0 565.4,446.2 566.3,447.7 567.2,450.4 568.1,452.1 569.0,452.0 569.8,450.9 570.7,450.0 571.6,449.3 572.5,448.8 573.4,448.6 574.3,448.9 575.2,449.4 576.1,450.0 577.0,450.6 577.9,451.2 578.8,451.4 579.7,450.9 580.6,450.0 581.5,449.6 582.3,450.5 583.2,451.8 584.1,452.4 585.0,451.6 585.9,450.0 586.8,449.2 587.7,449.7 588.6,451.0 589.5,452.0 590.4,452.2 591.3,452.3 592.2,452.3 593.1,452.5 593.9,452.7 594.8,452.4 595.7,451.0 596.6,449.0 597.5,448.0 598.4,449.0 599.3,451.0 600.2,451.9 601.1,450.4 602.0,447.8 602.9,446.1 603.8,446.5 604.7,447.7 605.6,448.5 606.4,447.8 607.3,446.5 608.2,446.2 609.1,448.2 610.0,451.1 610.9,452.6 611.8,451.2 612.7,448.5 613.6,446.8 614.5,447.5 615.4,449.2 616.3,450.4 617.2,450.3 618.0,449.7 618.9,449.3 619.8,449.4 620.7,449.7 621.6,449.8 622.5,449.5 623.4,448.9 624.3,448.6 625.2,449.0 626.1,449.7 627.0,450.5 627.9,451.6 628.8,452.7 629.7,453.2 630.5,452.1 631.4,450.4 632.3,449.2 633.2,449.4 634.1,450.2 635.0,451.0 635.9,451.3 636.8,451.6 637.7,451.5 638.6,450.9 639.5,449.9 640.4,449.1 641.3,448.4 642.1,447.7 643.0,447.5 643.9,447.8 644.8,448.4 645.7,449.2 646.6,450.4 647.5,451.7 648.4,452.0 649.3,450.4 650.2,447.8 651.1,446.2 652.0,446.6 652.9,448.0 653.8,449.4 654.6,450.4 655.5,451.3 656.4,451.8 657.3,451.8 658.2,451.4 659.1,450.9 660.0,450.4 660.9,449.8 661.8,449.6 662.7,450.1 663.6,450.9 664.5,451.4 665.4,451.2 666.2,450.5 667.1,449.8 668.0,449.0 668.9,448.1 669.8,447.5 670.7,447.2 671.6,447.1 672.5,447.2 673.4,447.6 674.3,448.3 675.2,449.1 676.1,450.1 677.0,451.3 677.9,451.7 678.7,450.9 679.6,449.4 680.5,448.3 681.4,448.1 682.3,448.2 683.2,448.3 684.1,448.5 685.0,448.6 685.9,448.6 686.8,448.0 687.7,447.3 688.6,447.1 689.5,448.0 690.4,449.4 691.2,450.1 692.1,449.4 693.0,448.1 693.9,447.4 694.8,448.5 695.7,450.2 696.6,451.0 697.5,449.6 698.4,447.3 699.3,446.1 700.2,447.4 701.1,449.9 702.0,451.4 702.8,450.9 703.7,449.5 704.6,448.2 705.5,447.2 706.4,446.4 707.3,446.3 708.2,448.0 709.1,450.4 710.0,451.9 710.9,451.5 711.8,450.2 712.7,448.8 713.6,447.7 714.5,446.6 715.3,446.1 716.2,446.7 717.1,447.9 718.0,448.9 718.9,449.7 719.8,450.3 720.7,450.5 721.6,450.0 722.5,449.1 723.4,448.8 724.3,449.5 725.2,450.7 726.1,451.5 726.9,451.6 727.8,451.2 728.7,450.9 729.6,450.9 730.5,450.9 731.4,450.9 732.3,450.6 733.2,450.3 734.1,450.2 735.0,450.9 735.9,451.8 736.8,452.3 737.7,452.0 738.6,451.2 739.4,450.6 740.3,450.6 741.2,450.8 742.1,450.5 743.0,449.2 743.9,447.4 744.8,446.1"/><polyline fill="none" stroke="#e0605e" stroke-width="1.6" stroke-linejoin="round" stroke-linecap="round" points="345.8,498.4 346.7,498.5 347.6,498.6 348.5,498.8 349.4,498.8 350.3,498.8 351.2,498.7 352.0,498.6 352.9,498.4 353.8,498.4 354.7,498.5 355.6,498.7 356.5,498.9 357.4,498.9 358.3,499.0 359.2,498.9 360.1,498.8 361.0,498.5 361.9,498.4 362.8,498.5 363.7,498.8 364.5,498.9 365.4,498.8 366.3,498.7 367.2,498.5 368.1,498.5 369.0,498.5 369.9,498.6 370.8,498.7 371.7,498.8 372.6,498.9 373.5,499.0 374.4,498.9 375.3,498.8 376.1,498.7 377.0,498.5 377.9,498.4 378.8,498.4 379.7,498.5 380.6,498.6 381.5,498.6 382.4,498.6 383.3,498.6 384.2,498.6 385.1,498.5 386.0,498.5 386.9,498.4 387.8,498.4 388.6,498.4 389.5,498.4 390.4,498.4 391.3,498.5 392.2,498.6 393.1,498.7 394.0,498.8 394.9,498.6 395.8,498.4 396.7,498.3 397.6,498.3 398.5,498.5 399.4,498.6 400.2,498.7 401.1,498.6 402.0,498.6 402.9,498.5 403.8,498.3 404.7,498.3 405.6,498.3 406.5,498.4 407.4,498.5 408.3,498.6 409.2,498.6 410.1,498.7 411.0,498.7 411.9,498.7 412.7,498.6 413.6,498.5 414.5,498.3 415.4,498.3 416.3,498.5 417.2,498.7 418.1,498.9 419.0,498.9 419.9,498.9 420.8,498.8 421.7,498.9 422.6,498.9 423.5,498.9 424.4,498.8 425.2,498.5 426.1,498.3 427.0,498.3 427.9,498.4 428.8,498.4 429.7,498.4 430.6,498.3 431.5,498.3 432.4,498.4 433.3,498.7 434.2,498.8 435.1,498.7 436.0,498.6 436.8,498.4 437.7,498.4 438.6,498.3 439.5,498.3 440.4,498.4 441.3,498.5 442.2,498.5 443.1,498.7 444.0,498.8 444.9,498.9 445.8,498.9 446.7,498.9 447.6,498.8 448.5,498.7 449.3,498.6 450.2,498.4 451.1,498.4 452.0,498.3 452.9,498.4 453.8,498.5 454.7,498.7 455.6,498.9 456.5,498.9 457.4,498.7 458.3,498.6 459.2,498.7 460.1,498.7 460.9,498.7 461.8,498.6 462.7,498.4 463.6,498.3 464.5,498.3 465.4,498.2 466.3,498.3 467.2,498.4 468.1,498.6 469.0,498.7 469.9,498.7 470.8,498.6 471.7,498.5 472.6,498.4 473.4,498.3 474.3,498.3 475.2,498.5 476.1,498.7 477.0,498.9 477.9,498.9 478.8,498.8 479.7,498.7 480.6,498.7 481.5,498.8 482.4,498.8 483.3,498.7 484.2,498.4 485.0,498.3 485.9,498.5 486.8,498.7 487.7,498.8 488.6,498.7 489.5,498.4 490.4,498.3 491.3,498.4 492.2,498.7 493.1,498.9 494.0,498.8 494.9,498.7 495.8,498.6 496.7,498.5 497.5,498.5 498.4,498.5 499.3,498.5 500.2,498.6 501.1,498.6 502.0,498.7 502.9,498.9 503.8,498.9 504.7,498.8 505.6,498.6 506.5,498.4 507.4,498.4 508.3,498.3 509.1,498.3 510.0,498.4 510.9,498.5 511.8,498.6 512.7,498.6 513.6,498.5 514.5,498.4 515.4,498.4 516.3,498.3 517.2,498.3 518.1,498.3 519.0,498.4 519.9,498.4 520.8,498.3 521.6,498.3 522.5,498.3 523.4,498.3 524.3,498.4 525.2,498.4 526.1,498.4 527.0,498.4 527.9,498.5 528.8,498.5 529.7,498.4 530.6,498.5 531.5,498.6 532.4,498.7 533.2,498.8 534.1,498.7 535.0,498.6 535.9,498.5 536.8,498.5 537.7,498.6 538.6,498.6 539.5,498.5 540.4,498.4 541.3,498.4 542.2,498.4 543.1,498.5 544.0,498.5 544.9,498.4 545.7,498.3 546.6,498.3 547.5,498.3 548.4,498.4 549.3,498.4 550.2,498.4 551.1,498.3 552.0,498.3 552.9,498.4 553.8,498.6 554.7,498.8 555.6,498.8 556.5,498.7 557.4,498.6 558.2,498.5 559.1,498.4 560.0,498.4 560.9,498.4 561.8,498.5 562.7,498.6 563.6,498.7 564.5,498.9 565.4,498.9 566.3,498.7 567.2,498.5 568.1,498.3 569.0,498.4 569.8,498.7 570.7,498.8 571.6,498.8 572.5,498.6 573.4,498.6 574.3,498.5 575.2,498.6 576.1,498.6 577.0,498.7 577.9,498.8 578.8,498.8 579.7,498.8 580.6,498.6 581.5,498.5 582.3,498.5 583.2,498.6 584.1,498.6 585.0,498.6 585.9,498.7 586.8,498.7 587.7,498.8 588.6,498.9 589.5,498.9 590.4,498.8 591.3,498.6 592.2,498.5 593.1,498.6 593.9,498.7 594.8,498.8 595.7,498.8 596.6,498.8 597.5,498.7 598.4,498.7 599.3,498.7 600.2,498.7 601.1,498.6 602.0,498.6 602.9,498.5 603.8,498.5 604.7,498.5 605.6,498.5 606.4,498.4 607.3,498.3 608.2,498.3 609.1,498.3 610.0,498.3 610.9,498.3 611.8,498.3 612.7,498.3 613.6,498.3 614.5,498.4 615.4,498.7 616.3,498.8 617.2,498.7 618.0,498.6 618.9,498.4 619.8,498.4 620.7,498.4 621.6,498.4 622.5,498.3 623.4,498.3 624.3,498.3 625.2,498.5 626.1,498.7 627.0,498.8 627.9,498.9 628.8,498.9 629.7,498.9 630.5,498.8 631.4,498.8 632.3,498.7 633.2,498.6 634.1,498.5 635.0,498.4 635.9,498.4 636.8,498.4 637.7,498.4 638.6,498.4 639.5,498.4 640.4,498.5 641.3,498.5 642.1,498.6 643.0,498.6 643.9,498.5 644.8,498.4 645.7,498.4 646.6,498.4 647.5,498.5 648.4,498.6 649.3,498.5 650.2,498.4 651.1,498.4 652.0,498.6 652.9,498.8 653.8,498.9 654.6,499.0 655.5,499.0 656.4,498.9 657.3,498.9 658.2,498.7 659.1,498.6 660.0,498.5 660.9,498.4 661.8,498.4 662.7,498.6 663.6,498.8 664.5,498.9 665.4,498.8 666.2,498.6 667.1,498.5 668.0,498.5 668.9,498.5 669.8,498.5 670.7,498.4 671.6,498.3 672.5,498.3 673.4,498.3 674.3,498.4 675.2,498.5 676.1,498.6 677.0,498.6 677.9,498.6 678.7,498.6 679.6,498.6 680.5,498.6 681.4,498.5 682.3,498.4 683.2,498.4 684.1,498.5 685.0,498.6 685.9,498.6 686.8,498.5 687.7,498.4 688.6,498.3 689.5,498.3 690.4,498.4 691.2,498.4 692.1,498.4 693.0,498.3 693.9,498.3 694.8,498.4 695.7,498.5 696.6,498.5 697.5,498.5 698.4,498.4 699.3,498.3 700.2,498.2 701.1,498.2 702.0,498.3 702.8,498.3 703.7,498.4 704.6,498.5 705.5,498.5 706.4,498.4 707.3,498.4 708.2,498.5 709.1,498.6 710.0,498.7 710.9,498.7 711.8,498.6 712.7,498.6 713.6,498.7 714.5,498.7 715.3,498.8 716.2,498.8 717.1,498.7 718.0,498.7 718.9,498.7 719.8,498.7 720.7,498.8 721.6,498.8 722.5,498.9 723.4,498.9 724.3,498.8 725.2,498.6 726.1,498.5 726.9,498.5 727.8,498.4 728.7,498.5 729.6,498.6 730.5,498.8 731.4,498.9 732.3,498.8 733.2,498.5 734.1,498.4 735.0,498.4 735.9,498.6 736.8,498.8 737.7,498.8 738.6,498.8 739.4,498.7 740.3,498.6 741.2,498.4 742.1,498.3 743.0,498.4 743.9,498.7 744.8,498.8"/></svg>
<div class="t m" style="left:293.4px;top:376px;font-size:11px;color:#6b7078;">€0.0015</div>
<div class="t m" style="left:293.4px;top:405px;font-size:11px;color:#6b7078;">€0.0012</div>
<div class="t m" style="left:286.8px;top:435px;font-size:11px;color:#6b7078;">€0.00077</div>
<div class="t m" style="left:286.8px;top:465px;font-size:11px;color:#6b7078;">€0.00038</div>
<div class="t m" style="left:306.7px;top:494px;font-size:11px;color:#6b7078;">€0.00</div>
<div class="abs" style="left:275px;top:500px;width:481px;height:24px;overflow:hidden">
<div class="t" style="left:53.0px;top:6px;font-size:12.5px;color:#7d828a;letter-spacing:0.56px;">08:54</div>
<div class="t" style="left:155.0px;top:6px;font-size:12.5px;color:#7d828a;letter-spacing:-0.37px;">10:24</div>
<div class="t" style="left:255.9px;top:6px;font-size:12.5px;color:#7d828a;letter-spacing:-0.26px;">11:54</div>
<div class="t" style="left:355.3px;top:6px;font-size:12.5px;color:#7d828a;letter-spacing:-0.09px;">13:24</div>
<div class="t" style="left:455.4px;top:6px;font-size:12.5px;color:#7d828a;letter-spacing:0.06px;">14:54</div>
</div>
<svg class="abs" style="left:275px;top:683px;overflow:hidden" width="481" height="190" viewBox="275 683 481 190"><polygon fill="rgba(232,177,90,0.08)" points="345.8,738.1 346.7,734.6 347.6,730.2 348.5,729.8 349.4,738.1 350.3,750.5 351.2,757.7 352.0,754.7 352.9,746.5 353.8,739.2 354.7,733.7 355.6,729.0 356.5,728.3 357.4,735.8 358.3,747.3 359.2,753.3 360.1,747.0 361.0,735.1 361.9,727.9 362.8,730.4 363.7,737.5 364.5,744.2 365.4,749.6 366.3,754.6 367.2,756.6 368.1,753.3 369.0,746.9 369.9,742.1 370.8,740.6 371.7,740.7 372.6,740.9 373.5,740.9 374.4,741.1 375.3,741.0 376.1,740.5 377.0,739.7 377.9,739.8 378.8,741.5 379.7,743.9 380.6,745.4 381.5,744.7 382.4,742.9 383.3,742.8 384.2,746.7 385.1,752.1 386.0,753.9 386.9,747.1 387.8,736.7 388.6,731.8 389.5,739.5 390.4,752.7 391.3,759.5 392.2,751.5 393.1,737.1 394.0,728.9 394.9,734.7 395.8,746.8 396.7,754.5 397.6,751.9 398.5,744.8 399.4,739.7 400.2,740.3 401.1,742.8 402.0,743.3 402.9,738.2 403.8,731.0 404.7,728.1 405.6,734.4 406.5,744.9 407.4,751.8 408.3,750.9 409.2,746.4 410.1,742.7 411.0,741.6 411.9,741.4 412.7,741.4 413.6,741.7 414.5,742.1 415.4,741.4 416.3,737.9 417.2,733.2 418.1,731.2 419.0,734.4 419.9,740.2 420.8,744.6 421.7,745.7 422.6,745.4 423.5,745.1 424.4,744.9 425.2,744.7 426.1,745.6 427.0,749.7 427.9,754.9 428.8,756.1 429.7,748.2 430.6,736.3 431.5,730.0 432.4,736.2 433.3,748.1 434.2,754.5 435.1,749.0 436.0,738.2 436.8,731.1 437.7,732.6 438.6,737.9 439.5,741.7 440.4,741.6 441.3,740.0 442.2,739.0 443.1,739.6 444.0,740.8 444.9,741.7 445.8,741.7 446.7,741.4 447.6,741.3 448.5,741.8 449.3,742.4 450.2,742.7 451.1,742.1 452.0,741.2 452.9,740.7 453.8,740.5 454.7,740.8 455.6,742.3 456.5,746.7 457.4,752.3 458.3,755.4 459.2,753.5 460.1,748.9 460.9,745.5 461.8,744.8 462.7,745.2 463.6,745.5 464.5,745.0 465.4,744.4 466.3,744.2 467.2,745.2 468.1,746.8 469.0,747.3 469.9,746.3 470.8,744.3 471.7,741.6 472.6,737.4 473.4,732.5 474.3,730.0 475.2,731.9 476.1,736.2 477.0,739.9 477.9,742.1 478.8,743.6 479.7,744.5 480.6,744.6 481.5,743.9 482.4,743.2 483.3,742.7 484.2,742.2 485.0,741.7 485.9,740.5 486.8,739.4 487.7,740.1 488.6,745.2 489.5,752.2 490.4,755.9 491.3,753.6 492.2,747.9 493.1,742.3 494.0,736.9 494.9,731.5 495.8,729.1 496.7,732.4 497.5,738.8 498.4,743.1 499.3,742.0 500.2,738.8 501.1,738.0 502.0,743.5 502.9,751.4 503.8,754.5 504.7,747.4 505.6,735.6 506.5,728.2 507.4,729.9 508.3,736.1 509.1,742.0 510.0,747.6 510.9,753.0 511.8,753.9 512.7,745.0 513.6,731.6 514.5,724.6 515.4,732.1 516.3,746.1 517.2,753.7 518.1,746.7 519.0,733.4 519.9,726.2 520.8,733.4 521.6,746.7 522.5,754.3 523.4,748.5 524.3,736.9 525.2,730.4 526.1,735.7 527.0,746.0 527.9,751.5 528.8,745.6 529.7,734.9 530.6,728.5 531.5,731.3 532.4,738.5 533.2,744.5 534.1,747.5 535.0,749.4 535.9,749.9 536.8,748.7 537.7,746.3 538.6,744.0 539.5,742.9 540.4,742.0 541.3,740.5 542.2,737.4 543.1,733.6 544.0,731.8 544.9,733.3 545.7,736.7 546.6,739.9 547.5,742.2 548.4,744.2 549.3,745.5 550.2,745.4 551.1,744.6 552.0,745.0 552.9,748.6 553.8,753.4 554.7,755.2 555.6,750.9 556.5,743.7 557.4,738.5 558.2,737.9 559.1,739.4 560.0,740.7 560.9,741.7 561.8,742.5 562.7,741.9 563.6,737.9 564.5,732.4 565.4,729.5 566.3,732.2 567.2,737.6 568.1,741.4 569.0,741.2 569.8,739.4 570.7,739.1 571.6,742.7 572.5,747.8 573.4,750.3 574.3,748.1 575.2,743.3 576.1,738.5 577.0,733.1 577.9,727.7 578.8,726.6 579.7,734.8 580.6,747.3 581.5,754.1 582.3,748.5 583.2,737.1 584.1,729.7 585.0,730.8 585.9,735.9 586.8,741.2 587.7,746.8 588.6,752.5 589.5,754.1 590.4,747.6 591.3,737.1 592.2,730.4 593.1,731.9 593.9,737.2 594.8,741.5 595.7,743.0 596.6,743.5 597.5,743.7 598.4,743.4 599.3,742.8 600.2,743.3 601.1,746.8 602.0,751.4 602.9,752.2 603.8,744.5 604.7,733.0 605.6,727.3 606.4,734.3 607.3,747.0 608.2,754.0 609.1,748.2 610.0,736.7 610.9,729.8 611.8,732.9 612.7,740.5 613.6,746.0 614.5,745.9 615.4,743.6 616.3,742.9 617.2,746.5 618.0,751.7 618.9,753.9 619.8,750.6 620.7,744.3 621.6,738.6 622.5,733.7 623.4,729.3 624.3,728.8 625.2,736.1 626.1,747.1 627.0,753.1 627.9,748.1 628.8,738.1 629.7,731.5 630.5,732.9 631.4,737.8 632.3,741.3 633.2,741.2 634.1,739.7 635.0,738.9 635.9,739.3 636.8,740.4 637.7,742.2 638.6,746.3 639.5,751.1 640.4,751.8 641.3,743.5 642.1,731.1 643.0,725.1 643.9,733.1 644.8,747.5 645.7,755.8 646.6,750.2 647.5,738.6 648.4,732.1 649.3,737.7 650.2,748.3 651.1,753.8 652.0,747.3 652.9,735.7 653.8,729.5 654.6,735.4 655.5,746.7 656.4,753.8 657.3,752.1 658.2,746.1 659.1,740.4 660.0,735.6 660.9,730.9 661.8,728.7 662.7,729.9 663.6,733.5 664.5,737.8 665.4,744.3 666.2,751.5 667.1,753.8 668.0,745.6 668.9,732.5 669.8,725.5 670.7,732.1 671.6,744.8 672.5,752.4 673.4,747.6 674.3,737.7 675.2,732.5 676.1,738.8 677.0,750.0 677.9,755.1 678.7,747.3 679.6,733.5 680.5,724.5 681.4,725.4 682.3,731.2 683.2,737.1 684.1,743.0 685.0,749.0 685.9,750.8 686.8,744.4 687.7,733.8 688.6,727.0 689.5,727.9 690.4,732.6 691.2,737.5 692.1,742.9 693.0,748.5 693.9,749.9 694.8,742.0 695.7,729.8 696.6,724.1 697.5,732.8 698.4,748.0 699.3,756.4 700.2,749.1 701.1,735.2 702.0,727.7 702.8,735.4 703.7,749.6 704.6,757.4 705.5,750.7 706.4,737.6 707.3,729.3 708.2,731.6 709.1,738.7 710.0,743.6 710.9,742.6 711.8,739.5 712.7,738.5 713.6,743.3 714.5,750.3 715.3,753.1 716.2,746.9 717.1,736.5 718.0,730.0 718.9,731.4 719.8,736.6 720.7,741.5 721.6,745.5 722.5,749.0 723.4,749.2 724.3,742.4 725.2,732.2 726.1,726.2 726.9,727.9 727.8,733.8 728.7,740.0 729.6,746.8 730.5,753.9 731.4,756.0 732.3,747.6 733.2,734.2 734.1,727.1 735.0,733.4 735.9,746.1 736.8,755.4 737.7,757.2 738.6,755.6 739.4,753.0 740.3,750.5 741.2,747.0 742.1,742.5 743.0,735.8 743.9,728.2 744.8,722.7 744.8,823 345.8,823"/><polygon fill="rgba(224,96,94,0.085)" points="345.8,777.7 346.7,778.6 347.6,779.8 348.5,780.9 349.4,781.8 350.3,782.6 351.2,782.5 352.0,780.7 352.9,777.9 353.8,776.2 354.7,776.4 355.6,777.7 356.5,778.8 357.4,779.2 358.3,779.3 359.2,779.4 360.1,779.3 361.0,779.0 361.9,779.0 362.8,779.7 363.7,780.6 364.5,781.1 365.4,780.7 366.3,779.9 367.2,779.4 368.1,779.6 369.0,780.1 369.9,780.4 370.8,780.1 371.7,779.6 372.6,779.2 373.5,779.2 374.4,779.4 375.3,779.3 376.1,778.8 377.0,778.0 377.9,778.1 378.8,779.8 379.7,782.2 380.6,783.7 381.5,783.5 382.4,782.3 383.3,781.1 384.2,779.8 385.1,778.5 386.0,778.0 386.9,779.3 387.8,781.4 388.6,783.1 389.5,783.8 390.4,784.0 391.3,783.8 392.2,783.1 393.1,781.9 394.0,780.9 394.9,780.1 395.8,779.4 396.7,778.9 397.6,778.3 398.5,777.9 399.4,778.0 400.2,779.1 401.1,780.7 402.0,781.6 402.9,781.4 403.8,780.6 404.7,779.8 405.6,779.1 406.5,778.5 407.4,778.4 408.3,779.1 409.2,780.3 410.1,781.0 411.0,780.8 411.9,780.2 412.7,779.7 413.6,779.4 414.5,779.3 415.4,779.7 416.3,780.9 417.2,782.5 418.1,783.6 419.0,783.7 419.9,783.2 420.8,782.9 421.7,783.0 422.6,783.3 423.5,783.4 424.4,782.9 425.2,782.2 426.1,781.9 427.0,782.2 427.9,782.9 428.8,783.1 429.7,782.4 430.6,781.3 431.5,780.6 432.4,780.8 433.3,781.5 434.2,782.0 435.1,782.4 436.0,782.7 436.8,782.7 437.7,782.0 438.6,781.0 439.5,780.0 440.4,778.9 441.3,777.8 442.2,777.3 443.1,777.9 444.0,779.1 444.9,780.0 445.8,780.0 446.7,779.7 447.6,779.6 448.5,780.1 449.3,780.7 450.2,781.0 451.1,780.4 452.0,779.5 452.9,779.0 453.8,779.3 454.7,779.9 455.6,780.6 456.5,781.0 457.4,781.5 458.3,782.0 459.2,782.6 460.1,783.3 460.9,783.8 461.8,784.0 462.7,784.0 463.6,783.8 464.5,783.4 465.4,782.8 466.3,782.5 467.2,782.9 468.1,783.5 469.0,783.6 469.9,782.5 470.8,780.9 471.7,779.9 472.6,780.3 473.4,781.5 474.3,782.2 475.2,781.9 476.1,781.2 477.0,780.9 477.9,781.4 478.8,782.3 479.7,782.8 480.6,782.7 481.5,782.1 482.4,781.5 483.3,781.0 484.2,780.5 485.0,780.0 485.9,779.3 486.8,778.6 487.7,778.4 488.6,779.4 489.5,780.9 490.4,781.8 491.3,781.7 492.2,781.0 493.1,780.6 494.0,780.8 494.9,781.2 495.8,781.5 496.7,781.7 497.5,781.8 498.4,781.4 499.3,779.7 500.2,777.5 501.1,776.3 502.0,777.0 502.9,778.6 503.8,779.8 504.7,779.8 505.6,779.3 506.5,779.1 507.4,779.4 508.3,779.9 509.1,780.3 510.0,780.8 510.9,781.1 511.8,780.9 512.7,779.7 513.6,777.8 514.5,776.6 515.4,776.7 516.3,777.4 517.2,778.1 518.1,778.4 519.0,778.7 519.9,779.1 520.8,779.5 521.6,779.9 522.5,780.3 523.4,781.0 524.3,781.7 525.2,781.9 526.1,781.2 527.0,780.0 527.9,779.2 528.8,778.9 529.7,778.9 530.6,779.1 531.5,779.8 532.4,780.6 533.2,780.8 534.1,779.4 535.0,777.4 535.9,776.5 536.8,778.0 537.7,780.7 538.6,782.3 539.5,781.6 540.4,779.8 541.3,778.8 542.2,779.6 543.1,781.1 544.0,782.1 544.9,781.9 545.7,781.1 546.6,780.9 547.5,781.7 548.4,782.9 549.3,783.8 550.2,784.0 551.1,783.7 552.0,783.3 552.9,782.7 553.8,782.0 554.7,781.0 555.6,779.5 556.5,777.8 557.4,776.8 558.2,777.1 559.1,778.1 560.0,779.0 560.9,779.5 561.8,779.9 562.7,780.2 563.6,780.6 564.5,781.1 565.4,781.0 566.3,780.1 567.2,778.8 568.1,777.7 569.0,777.4 569.8,777.4 570.7,777.4 571.6,777.3 572.5,777.3 573.4,777.4 574.3,778.1 575.2,779.0 576.1,779.5 577.0,779.2 577.9,778.4 578.8,778.0 579.7,778.1 580.6,778.4 581.5,778.9 582.3,779.8 583.2,780.8 584.1,781.3 585.0,780.9 585.9,779.9 586.8,779.5 587.7,780.3 588.6,781.5 589.5,782.4 590.4,782.3 591.3,781.8 592.2,781.3 593.1,780.7 593.9,780.1 594.8,779.8 595.7,780.4 596.6,781.3 597.5,782.0 598.4,782.1 599.3,781.9 600.2,781.6 601.1,781.1 602.0,780.4 602.9,779.8 603.8,779.3 604.7,778.9 605.6,778.6 606.4,778.7 607.3,779.0 608.2,779.3 609.1,779.6 610.0,779.9 610.9,780.3 611.8,781.0 612.7,781.8 613.6,782.3 614.5,782.2 615.4,781.7 616.3,781.2 617.2,780.6 618.0,779.8 618.9,779.1 619.8,778.2 620.7,777.3 621.6,776.9 622.5,777.4 623.4,778.4 624.3,779.3 625.2,779.7 626.1,780.0 627.0,780.4 627.9,781.1 628.8,782.0 629.7,782.3 630.5,781.7 631.4,780.7 632.3,779.6 633.2,778.6 634.1,777.5 635.0,777.2 635.9,778.0 636.8,779.5 637.7,780.5 638.6,780.6 639.5,780.3 640.4,779.7 641.3,778.8 642.1,777.7 643.0,777.4 643.9,778.6 644.8,780.7 645.7,782.2 646.6,782.7 647.5,782.7 648.4,782.4 649.3,782.0 650.2,781.3 651.1,780.8 652.0,780.8 652.9,780.9 653.8,780.7 654.6,780.0 655.5,779.1 656.4,778.6 657.3,779.4 658.2,780.6 659.1,781.4 660.0,781.0 660.9,780.2 661.8,779.5 662.7,779.1 663.6,778.9 664.5,778.8 665.4,778.8 666.2,778.9 667.1,778.9 668.0,778.2 668.9,777.4 669.8,777.2 670.7,778.1 671.6,779.6 672.5,780.9 673.4,782.0 674.3,783.0 675.2,783.5 676.1,783.7 677.0,783.4 677.9,782.6 678.7,780.8 679.6,778.3 680.5,776.7 681.4,776.7 682.3,777.5 683.2,778.1 684.1,778.1 685.0,777.9 685.9,777.9 686.8,778.7 687.7,779.6 688.6,779.9 689.5,778.8 690.4,777.1 691.2,775.8 692.1,775.5 693.0,775.6 693.9,775.8 694.8,776.0 695.7,776.3 696.6,776.9 697.5,778.1 698.4,779.7 699.3,780.7 700.2,780.6 701.1,779.9 702.0,779.8 702.8,781.0 703.7,782.9 704.6,783.8 705.5,782.9 706.4,781.0 707.3,779.7 708.2,779.4 709.1,779.6 710.0,779.8 710.9,779.8 711.8,779.7 712.7,779.5 713.6,778.9 714.5,778.2 715.3,778.1 716.2,779.1 717.1,780.6 718.0,781.4 718.9,780.6 719.8,779.0 720.7,777.7 721.6,777.2 722.5,777.0 723.4,777.0 724.3,777.3 725.2,777.7 726.1,778.1 726.9,778.1 727.8,778.0 728.7,778.3 729.6,779.3 730.5,780.7 731.4,781.5 732.3,781.1 733.2,780.0 734.1,779.4 735.0,779.6 735.9,780.3 736.8,780.6 737.7,780.2 738.6,779.4 739.4,779.2 740.3,780.0 741.2,781.3 742.1,782.1 743.0,781.9 743.9,781.1 744.8,780.6 744.8,823 345.8,823"/><polygon fill="rgba(91,143,199,0.09)" points="345.8,782.9 346.7,778.6 347.6,772.9 348.5,771.5 349.4,778.9 350.3,790.5 351.2,797.8 352.0,796.6 352.9,791.2 353.8,785.6 354.7,779.9 355.6,773.9 356.5,772.1 357.4,779.3 358.3,790.6 359.2,796.4 360.1,790.3 361.0,778.7 361.9,771.5 362.8,773.3 363.7,779.5 364.5,785.6 365.4,791.5 366.3,797.3 367.2,799.8 368.1,796.3 369.0,789.4 369.9,784.3 370.8,783.1 371.7,783.7 372.6,784.3 373.5,784.3 374.4,784.3 375.3,784.3 376.1,784.3 377.0,784.3 377.9,784.3 378.8,784.3 379.7,784.3 380.6,784.3 381.5,783.8 382.4,783.3 383.3,784.3 384.2,789.5 385.1,796.3 386.0,798.5 386.9,790.5 387.8,777.9 388.6,771.3 389.5,778.3 390.4,791.3 391.3,798.3 392.2,791.0 393.1,777.7 394.0,770.5 394.9,777.2 395.8,790.0 396.7,798.2 397.6,796.1 398.5,789.4 399.4,784.3 400.2,783.8 401.1,784.8 402.0,784.3 402.9,779.4 403.8,773.0 404.7,770.9 405.6,777.8 406.5,789.0 407.4,796.0 408.3,794.4 409.2,788.7 410.1,784.3 411.0,783.4 411.9,783.9 412.7,784.3 413.6,784.8 414.5,785.3 415.4,784.3 416.3,779.6 417.2,773.3 418.1,770.2 419.0,773.3 419.9,779.6 420.8,784.3 421.7,785.3 422.6,784.7 423.5,784.3 424.4,784.6 425.2,785.0 426.1,786.3 427.0,790.1 427.9,794.7 428.8,795.6 429.7,788.4 430.6,777.6 431.5,772.0 432.4,778.0 433.3,789.2 434.2,795.1 435.1,789.2 436.0,778.1 436.8,771.1 437.7,773.2 438.6,779.5 439.5,784.3 440.4,785.3 441.3,784.8 442.2,784.3 443.1,784.3 444.0,784.3 444.9,784.3 445.8,784.3 446.7,784.3 447.6,784.3 448.5,784.3 449.3,784.3 450.2,784.3 451.1,784.3 452.0,784.3 452.9,784.3 453.8,783.9 454.7,783.4 455.6,784.3 456.5,788.2 457.4,793.4 458.3,796.0 459.2,793.4 460.1,788.2 460.9,784.3 461.8,783.4 462.7,783.9 463.6,784.3 464.5,784.2 465.4,784.1 466.3,784.3 467.2,785.0 468.1,785.9 469.0,786.3 469.9,786.4 470.8,786.0 471.7,784.3 472.6,779.6 473.4,773.6 474.3,770.4 475.2,772.6 476.1,777.6 477.0,781.6 477.9,783.2 478.8,783.9 479.7,784.3 480.6,784.5 481.5,784.4 482.4,784.3 483.3,784.3 484.2,784.3 485.0,784.3 485.9,783.8 486.8,783.4 487.7,784.3 488.6,788.4 489.5,793.9 490.4,796.7 491.3,794.5 492.2,789.5 493.1,784.3 494.0,778.7 494.9,772.9 495.8,770.2 496.7,773.3 497.5,779.6 498.4,784.3 499.3,784.9 500.2,783.9 501.1,784.3 502.0,789.1 502.9,795.4 503.8,797.3 504.7,790.3 505.6,778.9 506.5,771.8 507.4,773.2 508.3,778.8 509.1,784.3 510.0,789.5 510.9,794.5 511.8,795.5 512.7,787.9 513.6,776.3 514.5,770.6 515.4,778.0 516.3,791.3 517.2,798.3 518.1,790.9 519.0,777.2 519.9,769.7 520.8,776.5 521.6,789.4 522.5,796.5 523.4,790.1 524.3,777.9 525.2,771.1 526.1,777.1 527.0,788.6 527.9,794.9 528.8,789.4 529.7,778.6 530.6,772.0 531.5,774.2 532.4,780.5 533.2,786.3 534.1,790.7 535.0,794.6 535.9,796.0 536.8,793.3 537.7,788.1 538.6,784.3 539.5,783.9 540.4,784.8 541.3,784.3 542.2,780.4 543.1,775.2 544.0,772.3 544.9,774.1 545.7,778.2 546.6,781.6 547.5,783.1 548.4,783.8 549.3,784.3 550.2,784.0 551.1,783.5 552.0,784.3 552.9,788.5 553.8,794.0 554.7,796.8 555.6,794.0 556.5,788.5 557.4,784.3 558.2,783.4 559.1,783.8 560.0,784.3 560.9,784.8 561.8,785.3 562.7,784.3 563.6,779.8 564.5,773.9 565.4,771.1 566.3,774.7 567.2,781.5 568.1,786.3 569.0,786.4 569.8,784.6 570.7,784.3 571.6,788.0 572.5,793.1 573.4,795.5 574.3,792.6 575.2,786.9 576.1,781.6 577.0,776.5 577.9,771.9 578.8,771.3 579.7,779.3 580.6,791.5 581.5,797.8 582.3,791.3 583.2,778.9 584.1,771.0 585.0,772.6 585.9,778.6 586.8,784.3 587.7,789.1 588.6,793.5 589.5,794.3 590.4,787.9 591.3,777.9 592.2,771.7 593.1,773.8 593.9,779.7 594.8,784.3 595.7,785.2 596.6,784.8 597.5,784.3 598.4,783.9 599.3,783.5 600.2,784.3 601.1,788.3 602.0,793.5 602.9,794.9 603.8,787.7 604.7,776.8 605.6,771.3 606.4,778.2 607.3,790.6 608.2,797.3 609.1,791.2 610.0,779.4 610.9,772.0 611.8,774.5 612.7,781.3 613.6,786.3 614.5,786.3 615.4,784.5 616.3,784.3 617.2,788.5 618.0,794.5 618.9,797.5 619.8,795.0 620.7,789.6 621.6,784.3 622.5,778.8 623.4,773.5 624.3,772.1 625.2,778.9 626.1,789.7 627.0,795.3 627.9,789.6 628.8,778.7 629.7,771.8 630.5,773.8 631.4,779.7 632.3,784.3 633.2,785.2 634.1,784.8 635.0,784.3 635.9,783.9 636.8,783.5 637.7,784.3 638.6,788.3 639.5,793.4 640.4,794.7 641.3,787.3 642.1,776.1 643.0,770.4 643.9,777.1 644.8,789.4 645.7,796.1 646.6,790.1 647.5,778.6 648.4,772.3 649.3,778.3 650.2,789.6 651.1,795.6 652.0,789.1 652.9,777.4 653.8,771.3 654.6,778.0 655.5,790.3 656.4,797.8 657.3,795.3 658.2,788.1 659.1,781.6 660.0,777.1 660.9,773.3 661.8,771.8 662.7,773.4 663.6,777.1 664.5,781.6 665.4,788.0 666.2,795.2 667.1,797.5 668.0,790.0 668.9,777.7 669.8,770.9 670.7,776.6 671.6,787.8 672.5,794.0 673.4,788.2 674.3,777.3 675.2,771.5 676.1,777.8 677.0,789.1 677.9,795.1 678.7,789.1 679.6,777.8 680.5,770.4 681.4,771.4 682.3,776.3 683.2,781.6 684.1,787.5 685.0,793.6 685.9,795.4 686.8,788.3 687.7,776.8 688.6,769.7 689.5,771.7 690.4,778.1 691.2,784.3 692.1,790.1 693.0,795.6 693.9,796.7 694.8,788.6 695.7,776.1 696.6,769.8 697.5,777.2 698.4,790.9 699.3,798.2 700.2,791.2 701.1,777.9 702.0,770.5 702.8,777.0 703.7,789.3 704.6,796.2 705.5,790.5 706.4,779.2 707.3,772.2 708.2,774.8 709.1,781.6 710.0,786.3 710.9,785.4 711.8,782.3 712.7,781.6 713.6,787.0 714.5,794.6 715.3,797.6 716.2,790.4 717.1,778.5 718.0,771.2 718.9,773.4 719.8,780.2 720.7,786.3 721.6,790.9 722.5,794.7 723.4,794.8 724.3,787.8 725.2,777.1 726.1,770.7 726.9,772.4 727.8,778.4 728.7,784.3 729.6,790.1 730.5,795.8 731.4,797.1 732.3,789.1 733.2,776.7 734.1,770.3 735.0,776.4 735.9,788.4 736.8,797.3 737.7,799.6 738.6,798.7 739.4,796.4 740.3,793.1 741.2,788.3 742.1,782.9 743.0,776.5 743.9,769.6 744.8,764.7 744.8,823 345.8,823"/><polyline fill="none" stroke="#e8b15a" stroke-width="1.75" stroke-linejoin="round" stroke-linecap="round" points="345.8,738.1 346.7,734.6 347.6,730.2 348.5,729.8 349.4,738.1 350.3,750.5 351.2,757.7 352.0,754.7 352.9,746.5 353.8,739.2 354.7,733.7 355.6,729.0 356.5,728.3 357.4,735.8 358.3,747.3 359.2,753.3 360.1,747.0 361.0,735.1 361.9,727.9 362.8,730.4 363.7,737.5 364.5,744.2 365.4,749.6 366.3,754.6 367.2,756.6 368.1,753.3 369.0,746.9 369.9,742.1 370.8,740.6 371.7,740.7 372.6,740.9 373.5,740.9 374.4,741.1 375.3,741.0 376.1,740.5 377.0,739.7 377.9,739.8 378.8,741.5 379.7,743.9 380.6,745.4 381.5,744.7 382.4,742.9 383.3,742.8 384.2,746.7 385.1,752.1 386.0,753.9 386.9,747.1 387.8,736.7 388.6,731.8 389.5,739.5 390.4,752.7 391.3,759.5 392.2,751.5 393.1,737.1 394.0,728.9 394.9,734.7 395.8,746.8 396.7,754.5 397.6,751.9 398.5,744.8 399.4,739.7 400.2,740.3 401.1,742.8 402.0,743.3 402.9,738.2 403.8,731.0 404.7,728.1 405.6,734.4 406.5,744.9 407.4,751.8 408.3,750.9 409.2,746.4 410.1,742.7 411.0,741.6 411.9,741.4 412.7,741.4 413.6,741.7 414.5,742.1 415.4,741.4 416.3,737.9 417.2,733.2 418.1,731.2 419.0,734.4 419.9,740.2 420.8,744.6 421.7,745.7 422.6,745.4 423.5,745.1 424.4,744.9 425.2,744.7 426.1,745.6 427.0,749.7 427.9,754.9 428.8,756.1 429.7,748.2 430.6,736.3 431.5,730.0 432.4,736.2 433.3,748.1 434.2,754.5 435.1,749.0 436.0,738.2 436.8,731.1 437.7,732.6 438.6,737.9 439.5,741.7 440.4,741.6 441.3,740.0 442.2,739.0 443.1,739.6 444.0,740.8 444.9,741.7 445.8,741.7 446.7,741.4 447.6,741.3 448.5,741.8 449.3,742.4 450.2,742.7 451.1,742.1 452.0,741.2 452.9,740.7 453.8,740.5 454.7,740.8 455.6,742.3 456.5,746.7 457.4,752.3 458.3,755.4 459.2,753.5 460.1,748.9 460.9,745.5 461.8,744.8 462.7,745.2 463.6,745.5 464.5,745.0 465.4,744.4 466.3,744.2 467.2,745.2 468.1,746.8 469.0,747.3 469.9,746.3 470.8,744.3 471.7,741.6 472.6,737.4 473.4,732.5 474.3,730.0 475.2,731.9 476.1,736.2 477.0,739.9 477.9,742.1 478.8,743.6 479.7,744.5 480.6,744.6 481.5,743.9 482.4,743.2 483.3,742.7 484.2,742.2 485.0,741.7 485.9,740.5 486.8,739.4 487.7,740.1 488.6,745.2 489.5,752.2 490.4,755.9 491.3,753.6 492.2,747.9 493.1,742.3 494.0,736.9 494.9,731.5 495.8,729.1 496.7,732.4 497.5,738.8 498.4,743.1 499.3,742.0 500.2,738.8 501.1,738.0 502.0,743.5 502.9,751.4 503.8,754.5 504.7,747.4 505.6,735.6 506.5,728.2 507.4,729.9 508.3,736.1 509.1,742.0 510.0,747.6 510.9,753.0 511.8,753.9 512.7,745.0 513.6,731.6 514.5,724.6 515.4,732.1 516.3,746.1 517.2,753.7 518.1,746.7 519.0,733.4 519.9,726.2 520.8,733.4 521.6,746.7 522.5,754.3 523.4,748.5 524.3,736.9 525.2,730.4 526.1,735.7 527.0,746.0 527.9,751.5 528.8,745.6 529.7,734.9 530.6,728.5 531.5,731.3 532.4,738.5 533.2,744.5 534.1,747.5 535.0,749.4 535.9,749.9 536.8,748.7 537.7,746.3 538.6,744.0 539.5,742.9 540.4,742.0 541.3,740.5 542.2,737.4 543.1,733.6 544.0,731.8 544.9,733.3 545.7,736.7 546.6,739.9 547.5,742.2 548.4,744.2 549.3,745.5 550.2,745.4 551.1,744.6 552.0,745.0 552.9,748.6 553.8,753.4 554.7,755.2 555.6,750.9 556.5,743.7 557.4,738.5 558.2,737.9 559.1,739.4 560.0,740.7 560.9,741.7 561.8,742.5 562.7,741.9 563.6,737.9 564.5,732.4 565.4,729.5 566.3,732.2 567.2,737.6 568.1,741.4 569.0,741.2 569.8,739.4 570.7,739.1 571.6,742.7 572.5,747.8 573.4,750.3 574.3,748.1 575.2,743.3 576.1,738.5 577.0,733.1 577.9,727.7 578.8,726.6 579.7,734.8 580.6,747.3 581.5,754.1 582.3,748.5 583.2,737.1 584.1,729.7 585.0,730.8 585.9,735.9 586.8,741.2 587.7,746.8 588.6,752.5 589.5,754.1 590.4,747.6 591.3,737.1 592.2,730.4 593.1,731.9 593.9,737.2 594.8,741.5 595.7,743.0 596.6,743.5 597.5,743.7 598.4,743.4 599.3,742.8 600.2,743.3 601.1,746.8 602.0,751.4 602.9,752.2 603.8,744.5 604.7,733.0 605.6,727.3 606.4,734.3 607.3,747.0 608.2,754.0 609.1,748.2 610.0,736.7 610.9,729.8 611.8,732.9 612.7,740.5 613.6,746.0 614.5,745.9 615.4,743.6 616.3,742.9 617.2,746.5 618.0,751.7 618.9,753.9 619.8,750.6 620.7,744.3 621.6,738.6 622.5,733.7 623.4,729.3 624.3,728.8 625.2,736.1 626.1,747.1 627.0,753.1 627.9,748.1 628.8,738.1 629.7,731.5 630.5,732.9 631.4,737.8 632.3,741.3 633.2,741.2 634.1,739.7 635.0,738.9 635.9,739.3 636.8,740.4 637.7,742.2 638.6,746.3 639.5,751.1 640.4,751.8 641.3,743.5 642.1,731.1 643.0,725.1 643.9,733.1 644.8,747.5 645.7,755.8 646.6,750.2 647.5,738.6 648.4,732.1 649.3,737.7 650.2,748.3 651.1,753.8 652.0,747.3 652.9,735.7 653.8,729.5 654.6,735.4 655.5,746.7 656.4,753.8 657.3,752.1 658.2,746.1 659.1,740.4 660.0,735.6 660.9,730.9 661.8,728.7 662.7,729.9 663.6,733.5 664.5,737.8 665.4,744.3 666.2,751.5 667.1,753.8 668.0,745.6 668.9,732.5 669.8,725.5 670.7,732.1 671.6,744.8 672.5,752.4 673.4,747.6 674.3,737.7 675.2,732.5 676.1,738.8 677.0,750.0 677.9,755.1 678.7,747.3 679.6,733.5 680.5,724.5 681.4,725.4 682.3,731.2 683.2,737.1 684.1,743.0 685.0,749.0 685.9,750.8 686.8,744.4 687.7,733.8 688.6,727.0 689.5,727.9 690.4,732.6 691.2,737.5 692.1,742.9 693.0,748.5 693.9,749.9 694.8,742.0 695.7,729.8 696.6,724.1 697.5,732.8 698.4,748.0 699.3,756.4 700.2,749.1 701.1,735.2 702.0,727.7 702.8,735.4 703.7,749.6 704.6,757.4 705.5,750.7 706.4,737.6 707.3,729.3 708.2,731.6 709.1,738.7 710.0,743.6 710.9,742.6 711.8,739.5 712.7,738.5 713.6,743.3 714.5,750.3 715.3,753.1 716.2,746.9 717.1,736.5 718.0,730.0 718.9,731.4 719.8,736.6 720.7,741.5 721.6,745.5 722.5,749.0 723.4,749.2 724.3,742.4 725.2,732.2 726.1,726.2 726.9,727.9 727.8,733.8 728.7,740.0 729.6,746.8 730.5,753.9 731.4,756.0 732.3,747.6 733.2,734.2 734.1,727.1 735.0,733.4 735.9,746.1 736.8,755.4 737.7,757.2 738.6,755.6 739.4,753.0 740.3,750.5 741.2,747.0 742.1,742.5 743.0,735.8 743.9,728.2 744.8,722.7"/><polyline fill="none" stroke="#e0605e" stroke-width="1.4" stroke-linejoin="round" stroke-linecap="round" points="345.8,777.7 346.7,778.6 347.6,779.8 348.5,780.9 349.4,781.8 350.3,782.6 351.2,782.5 352.0,780.7 352.9,777.9 353.8,776.2 354.7,776.4 355.6,777.7 356.5,778.8 357.4,779.2 358.3,779.3 359.2,779.4 360.1,779.3 361.0,779.0 361.9,779.0 362.8,779.7 363.7,780.6 364.5,781.1 365.4,780.7 366.3,779.9 367.2,779.4 368.1,779.6 369.0,780.1 369.9,780.4 370.8,780.1 371.7,779.6 372.6,779.2 373.5,779.2 374.4,779.4 375.3,779.3 376.1,778.8 377.0,778.0 377.9,778.1 378.8,779.8 379.7,782.2 380.6,783.7 381.5,783.5 382.4,782.3 383.3,781.1 384.2,779.8 385.1,778.5 386.0,778.0 386.9,779.3 387.8,781.4 388.6,783.1 389.5,783.8 390.4,784.0 391.3,783.8 392.2,783.1 393.1,781.9 394.0,780.9 394.9,780.1 395.8,779.4 396.7,778.9 397.6,778.3 398.5,777.9 399.4,778.0 400.2,779.1 401.1,780.7 402.0,781.6 402.9,781.4 403.8,780.6 404.7,779.8 405.6,779.1 406.5,778.5 407.4,778.4 408.3,779.1 409.2,780.3 410.1,781.0 411.0,780.8 411.9,780.2 412.7,779.7 413.6,779.4 414.5,779.3 415.4,779.7 416.3,780.9 417.2,782.5 418.1,783.6 419.0,783.7 419.9,783.2 420.8,782.9 421.7,783.0 422.6,783.3 423.5,783.4 424.4,782.9 425.2,782.2 426.1,781.9 427.0,782.2 427.9,782.9 428.8,783.1 429.7,782.4 430.6,781.3 431.5,780.6 432.4,780.8 433.3,781.5 434.2,782.0 435.1,782.4 436.0,782.7 436.8,782.7 437.7,782.0 438.6,781.0 439.5,780.0 440.4,778.9 441.3,777.8 442.2,777.3 443.1,777.9 444.0,779.1 444.9,780.0 445.8,780.0 446.7,779.7 447.6,779.6 448.5,780.1 449.3,780.7 450.2,781.0 451.1,780.4 452.0,779.5 452.9,779.0 453.8,779.3 454.7,779.9 455.6,780.6 456.5,781.0 457.4,781.5 458.3,782.0 459.2,782.6 460.1,783.3 460.9,783.8 461.8,784.0 462.7,784.0 463.6,783.8 464.5,783.4 465.4,782.8 466.3,782.5 467.2,782.9 468.1,783.5 469.0,783.6 469.9,782.5 470.8,780.9 471.7,779.9 472.6,780.3 473.4,781.5 474.3,782.2 475.2,781.9 476.1,781.2 477.0,780.9 477.9,781.4 478.8,782.3 479.7,782.8 480.6,782.7 481.5,782.1 482.4,781.5 483.3,781.0 484.2,780.5 485.0,780.0 485.9,779.3 486.8,778.6 487.7,778.4 488.6,779.4 489.5,780.9 490.4,781.8 491.3,781.7 492.2,781.0 493.1,780.6 494.0,780.8 494.9,781.2 495.8,781.5 496.7,781.7 497.5,781.8 498.4,781.4 499.3,779.7 500.2,777.5 501.1,776.3 502.0,777.0 502.9,778.6 503.8,779.8 504.7,779.8 505.6,779.3 506.5,779.1 507.4,779.4 508.3,779.9 509.1,780.3 510.0,780.8 510.9,781.1 511.8,780.9 512.7,779.7 513.6,777.8 514.5,776.6 515.4,776.7 516.3,777.4 517.2,778.1 518.1,778.4 519.0,778.7 519.9,779.1 520.8,779.5 521.6,779.9 522.5,780.3 523.4,781.0 524.3,781.7 525.2,781.9 526.1,781.2 527.0,780.0 527.9,779.2 528.8,778.9 529.7,778.9 530.6,779.1 531.5,779.8 532.4,780.6 533.2,780.8 534.1,779.4 535.0,777.4 535.9,776.5 536.8,778.0 537.7,780.7 538.6,782.3 539.5,781.6 540.4,779.8 541.3,778.8 542.2,779.6 543.1,781.1 544.0,782.1 544.9,781.9 545.7,781.1 546.6,780.9 547.5,781.7 548.4,782.9 549.3,783.8 550.2,784.0 551.1,783.7 552.0,783.3 552.9,782.7 553.8,782.0 554.7,781.0 555.6,779.5 556.5,777.8 557.4,776.8 558.2,777.1 559.1,778.1 560.0,779.0 560.9,779.5 561.8,779.9 562.7,780.2 563.6,780.6 564.5,781.1 565.4,781.0 566.3,780.1 567.2,778.8 568.1,777.7 569.0,777.4 569.8,777.4 570.7,777.4 571.6,777.3 572.5,777.3 573.4,777.4 574.3,778.1 575.2,779.0 576.1,779.5 577.0,779.2 577.9,778.4 578.8,778.0 579.7,778.1 580.6,778.4 581.5,778.9 582.3,779.8 583.2,780.8 584.1,781.3 585.0,780.9 585.9,779.9 586.8,779.5 587.7,780.3 588.6,781.5 589.5,782.4 590.4,782.3 591.3,781.8 592.2,781.3 593.1,780.7 593.9,780.1 594.8,779.8 595.7,780.4 596.6,781.3 597.5,782.0 598.4,782.1 599.3,781.9 600.2,781.6 601.1,781.1 602.0,780.4 602.9,779.8 603.8,779.3 604.7,778.9 605.6,778.6 606.4,778.7 607.3,779.0 608.2,779.3 609.1,779.6 610.0,779.9 610.9,780.3 611.8,781.0 612.7,781.8 613.6,782.3 614.5,782.2 615.4,781.7 616.3,781.2 617.2,780.6 618.0,779.8 618.9,779.1 619.8,778.2 620.7,777.3 621.6,776.9 622.5,777.4 623.4,778.4 624.3,779.3 625.2,779.7 626.1,780.0 627.0,780.4 627.9,781.1 628.8,782.0 629.7,782.3 630.5,781.7 631.4,780.7 632.3,779.6 633.2,778.6 634.1,777.5 635.0,777.2 635.9,778.0 636.8,779.5 637.7,780.5 638.6,780.6 639.5,780.3 640.4,779.7 641.3,778.8 642.1,777.7 643.0,777.4 643.9,778.6 644.8,780.7 645.7,782.2 646.6,782.7 647.5,782.7 648.4,782.4 649.3,782.0 650.2,781.3 651.1,780.8 652.0,780.8 652.9,780.9 653.8,780.7 654.6,780.0 655.5,779.1 656.4,778.6 657.3,779.4 658.2,780.6 659.1,781.4 660.0,781.0 660.9,780.2 661.8,779.5 662.7,779.1 663.6,778.9 664.5,778.8 665.4,778.8 666.2,778.9 667.1,778.9 668.0,778.2 668.9,777.4 669.8,777.2 670.7,778.1 671.6,779.6 672.5,780.9 673.4,782.0 674.3,783.0 675.2,783.5 676.1,783.7 677.0,783.4 677.9,782.6 678.7,780.8 679.6,778.3 680.5,776.7 681.4,776.7 682.3,777.5 683.2,778.1 684.1,778.1 685.0,777.9 685.9,777.9 686.8,778.7 687.7,779.6 688.6,779.9 689.5,778.8 690.4,777.1 691.2,775.8 692.1,775.5 693.0,775.6 693.9,775.8 694.8,776.0 695.7,776.3 696.6,776.9 697.5,778.1 698.4,779.7 699.3,780.7 700.2,780.6 701.1,779.9 702.0,779.8 702.8,781.0 703.7,782.9 704.6,783.8 705.5,782.9 706.4,781.0 707.3,779.7 708.2,779.4 709.1,779.6 710.0,779.8 710.9,779.8 711.8,779.7 712.7,779.5 713.6,778.9 714.5,778.2 715.3,778.1 716.2,779.1 717.1,780.6 718.0,781.4 718.9,780.6 719.8,779.0 720.7,777.7 721.6,777.2 722.5,777.0 723.4,777.0 724.3,777.3 725.2,777.7 726.1,778.1 726.9,778.1 727.8,778.0 728.7,778.3 729.6,779.3 730.5,780.7 731.4,781.5 732.3,781.1 733.2,780.0 734.1,779.4 735.0,779.6 735.9,780.3 736.8,780.6 737.7,780.2 738.6,779.4 739.4,779.2 740.3,780.0 741.2,781.3 742.1,782.1 743.0,781.9 743.9,781.1 744.8,780.6"/><polyline fill="none" stroke="#5a94d0" stroke-width="1.55" stroke-linejoin="round" stroke-linecap="round" points="345.8,782.9 346.7,778.6 347.6,772.9 348.5,771.5 349.4,778.9 350.3,790.5 351.2,797.8 352.0,796.6 352.9,791.2 353.8,785.6 354.7,779.9 355.6,773.9 356.5,772.1 357.4,779.3 358.3,790.6 359.2,796.4 360.1,790.3 361.0,778.7 361.9,771.5 362.8,773.3 363.7,779.5 364.5,785.6 365.4,791.5 366.3,797.3 367.2,799.8 368.1,796.3 369.0,789.4 369.9,784.3 370.8,783.1 371.7,783.7 372.6,784.3 373.5,784.3 374.4,784.3 375.3,784.3 376.1,784.3 377.0,784.3 377.9,784.3 378.8,784.3 379.7,784.3 380.6,784.3 381.5,783.8 382.4,783.3 383.3,784.3 384.2,789.5 385.1,796.3 386.0,798.5 386.9,790.5 387.8,777.9 388.6,771.3 389.5,778.3 390.4,791.3 391.3,798.3 392.2,791.0 393.1,777.7 394.0,770.5 394.9,777.2 395.8,790.0 396.7,798.2 397.6,796.1 398.5,789.4 399.4,784.3 400.2,783.8 401.1,784.8 402.0,784.3 402.9,779.4 403.8,773.0 404.7,770.9 405.6,777.8 406.5,789.0 407.4,796.0 408.3,794.4 409.2,788.7 410.1,784.3 411.0,783.4 411.9,783.9 412.7,784.3 413.6,784.8 414.5,785.3 415.4,784.3 416.3,779.6 417.2,773.3 418.1,770.2 419.0,773.3 419.9,779.6 420.8,784.3 421.7,785.3 422.6,784.7 423.5,784.3 424.4,784.6 425.2,785.0 426.1,786.3 427.0,790.1 427.9,794.7 428.8,795.6 429.7,788.4 430.6,777.6 431.5,772.0 432.4,778.0 433.3,789.2 434.2,795.1 435.1,789.2 436.0,778.1 436.8,771.1 437.7,773.2 438.6,779.5 439.5,784.3 440.4,785.3 441.3,784.8 442.2,784.3 443.1,784.3 444.0,784.3 444.9,784.3 445.8,784.3 446.7,784.3 447.6,784.3 448.5,784.3 449.3,784.3 450.2,784.3 451.1,784.3 452.0,784.3 452.9,784.3 453.8,783.9 454.7,783.4 455.6,784.3 456.5,788.2 457.4,793.4 458.3,796.0 459.2,793.4 460.1,788.2 460.9,784.3 461.8,783.4 462.7,783.9 463.6,784.3 464.5,784.2 465.4,784.1 466.3,784.3 467.2,785.0 468.1,785.9 469.0,786.3 469.9,786.4 470.8,786.0 471.7,784.3 472.6,779.6 473.4,773.6 474.3,770.4 475.2,772.6 476.1,777.6 477.0,781.6 477.9,783.2 478.8,783.9 479.7,784.3 480.6,784.5 481.5,784.4 482.4,784.3 483.3,784.3 484.2,784.3 485.0,784.3 485.9,783.8 486.8,783.4 487.7,784.3 488.6,788.4 489.5,793.9 490.4,796.7 491.3,794.5 492.2,789.5 493.1,784.3 494.0,778.7 494.9,772.9 495.8,770.2 496.7,773.3 497.5,779.6 498.4,784.3 499.3,784.9 500.2,783.9 501.1,784.3 502.0,789.1 502.9,795.4 503.8,797.3 504.7,790.3 505.6,778.9 506.5,771.8 507.4,773.2 508.3,778.8 509.1,784.3 510.0,789.5 510.9,794.5 511.8,795.5 512.7,787.9 513.6,776.3 514.5,770.6 515.4,778.0 516.3,791.3 517.2,798.3 518.1,790.9 519.0,777.2 519.9,769.7 520.8,776.5 521.6,789.4 522.5,796.5 523.4,790.1 524.3,777.9 525.2,771.1 526.1,777.1 527.0,788.6 527.9,794.9 528.8,789.4 529.7,778.6 530.6,772.0 531.5,774.2 532.4,780.5 533.2,786.3 534.1,790.7 535.0,794.6 535.9,796.0 536.8,793.3 537.7,788.1 538.6,784.3 539.5,783.9 540.4,784.8 541.3,784.3 542.2,780.4 543.1,775.2 544.0,772.3 544.9,774.1 545.7,778.2 546.6,781.6 547.5,783.1 548.4,783.8 549.3,784.3 550.2,784.0 551.1,783.5 552.0,784.3 552.9,788.5 553.8,794.0 554.7,796.8 555.6,794.0 556.5,788.5 557.4,784.3 558.2,783.4 559.1,783.8 560.0,784.3 560.9,784.8 561.8,785.3 562.7,784.3 563.6,779.8 564.5,773.9 565.4,771.1 566.3,774.7 567.2,781.5 568.1,786.3 569.0,786.4 569.8,784.6 570.7,784.3 571.6,788.0 572.5,793.1 573.4,795.5 574.3,792.6 575.2,786.9 576.1,781.6 577.0,776.5 577.9,771.9 578.8,771.3 579.7,779.3 580.6,791.5 581.5,797.8 582.3,791.3 583.2,778.9 584.1,771.0 585.0,772.6 585.9,778.6 586.8,784.3 587.7,789.1 588.6,793.5 589.5,794.3 590.4,787.9 591.3,777.9 592.2,771.7 593.1,773.8 593.9,779.7 594.8,784.3 595.7,785.2 596.6,784.8 597.5,784.3 598.4,783.9 599.3,783.5 600.2,784.3 601.1,788.3 602.0,793.5 602.9,794.9 603.8,787.7 604.7,776.8 605.6,771.3 606.4,778.2 607.3,790.6 608.2,797.3 609.1,791.2 610.0,779.4 610.9,772.0 611.8,774.5 612.7,781.3 613.6,786.3 614.5,786.3 615.4,784.5 616.3,784.3 617.2,788.5 618.0,794.5 618.9,797.5 619.8,795.0 620.7,789.6 621.6,784.3 622.5,778.8 623.4,773.5 624.3,772.1 625.2,778.9 626.1,789.7 627.0,795.3 627.9,789.6 628.8,778.7 629.7,771.8 630.5,773.8 631.4,779.7 632.3,784.3 633.2,785.2 634.1,784.8 635.0,784.3 635.9,783.9 636.8,783.5 637.7,784.3 638.6,788.3 639.5,793.4 640.4,794.7 641.3,787.3 642.1,776.1 643.0,770.4 643.9,777.1 644.8,789.4 645.7,796.1 646.6,790.1 647.5,778.6 648.4,772.3 649.3,778.3 650.2,789.6 651.1,795.6 652.0,789.1 652.9,777.4 653.8,771.3 654.6,778.0 655.5,790.3 656.4,797.8 657.3,795.3 658.2,788.1 659.1,781.6 660.0,777.1 660.9,773.3 661.8,771.8 662.7,773.4 663.6,777.1 664.5,781.6 665.4,788.0 666.2,795.2 667.1,797.5 668.0,790.0 668.9,777.7 669.8,770.9 670.7,776.6 671.6,787.8 672.5,794.0 673.4,788.2 674.3,777.3 675.2,771.5 676.1,777.8 677.0,789.1 677.9,795.1 678.7,789.1 679.6,777.8 680.5,770.4 681.4,771.4 682.3,776.3 683.2,781.6 684.1,787.5 685.0,793.6 685.9,795.4 686.8,788.3 687.7,776.8 688.6,769.7 689.5,771.7 690.4,778.1 691.2,784.3 692.1,790.1 693.0,795.6 693.9,796.7 694.8,788.6 695.7,776.1 696.6,769.8 697.5,777.2 698.4,790.9 699.3,798.2 700.2,791.2 701.1,777.9 702.0,770.5 702.8,777.0 703.7,789.3 704.6,796.2 705.5,790.5 706.4,779.2 707.3,772.2 708.2,774.8 709.1,781.6 710.0,786.3 710.9,785.4 711.8,782.3 712.7,781.6 713.6,787.0 714.5,794.6 715.3,797.6 716.2,790.4 717.1,778.5 718.0,771.2 718.9,773.4 719.8,780.2 720.7,786.3 721.6,790.9 722.5,794.7 723.4,794.8 724.3,787.8 725.2,777.1 726.1,770.7 726.9,772.4 727.8,778.4 728.7,784.3 729.6,790.1 730.5,795.8 731.4,797.1 732.3,789.1 733.2,776.7 734.1,770.3 735.0,776.4 735.9,788.4 736.8,797.3 737.7,799.6 738.6,798.7 739.4,796.4 740.3,793.1 741.2,788.3 742.1,782.9 743.0,776.5 743.9,769.6 744.8,764.7"/></svg>
<div class="t m" style="left:293.4px;top:699px;font-size:11px;color:#6b7078;">€0.0036</div>
<div class="t m" style="left:293.4px;top:729px;font-size:11px;color:#6b7078;">€0.0027</div>
<div class="t m" style="left:293.4px;top:758px;font-size:11px;color:#6b7078;">€0.0018</div>
<div class="t m" style="left:293.4px;top:788px;font-size:11px;color:#6b7078;">€0.0009</div>
<div class="t m" style="left:306.7px;top:817px;font-size:11px;color:#6b7078;">€0.00</div>
<div class="abs" style="left:275px;top:823px;width:481px;height:24px;overflow:hidden">
<div class="t" style="left:53.0px;top:6px;font-size:12.5px;color:#7d828a;letter-spacing:0.56px;">08:54</div>
<div class="t" style="left:155.0px;top:6px;font-size:12.5px;color:#7d828a;letter-spacing:-0.37px;">10:24</div>
<div class="t" style="left:255.9px;top:6px;font-size:12.5px;color:#7d828a;letter-spacing:-0.26px;">11:54</div>
<div class="t" style="left:355.3px;top:6px;font-size:12.5px;color:#7d828a;letter-spacing:-0.09px;">13:24</div>
<div class="t" style="left:455.4px;top:6px;font-size:12.5px;color:#7d828a;letter-spacing:0.06px;">14:54</div>
</div>
<div class="t" style="left:275.4px;top:320px;font-size:14.75px;color:#eceef0;letter-spacing:0.11px;-webkit-text-stroke:0.15px #eceef0;">Cost trend</div>
<div class="abs" style="left:255px;top:348px;width:521px;height:1px;background:#181b22;"></div>
<div class="t" style="left:688.9px;top:322px;font-size:9.5px;color:#474c54;letter-spacing:0.54px;">ALLOCATED</div>
<div class="abs" style="left:275px;top:561px;width:481px;height:1px;background:#181b22;"></div>
<div class="abs" style="left:275.4px;top:581px;width:9.5px;height:2px;background:#5b8fc7;border-radius:1px"></div>
<div class="t" style="left:291.3px;top:576px;font-size:12.5px;color:#7a7f87;letter-spacing:-1.34px;">CPU</div>
<div class="abs" style="left:335.8px;top:581px;width:9.5px;height:2px;background:#5fbf77;border-radius:1px"></div>
<div class="t" style="left:352.4px;top:576px;font-size:12.5px;color:#7a7f87;letter-spacing:-0.05px;">Memory</div>
<div class="abs" style="left:418px;top:581px;width:9.5px;height:2px;background:#e0605e;border-radius:1px"></div>
<div class="t" style="left:434.3px;top:576px;font-size:12.5px;color:#7a7f87;letter-spacing:-0.08px;">Storage</div>
<div class="t" style="left:275.4px;top:642px;font-size:14.75px;color:#eceef0;letter-spacing:0.02px;-webkit-text-stroke:0.15px #eceef0;">Idle trend</div>
<div class="abs" style="left:255px;top:671px;width:521px;height:1px;background:#181b22;"></div>
<div class="abs" style="left:275px;top:884px;width:481px;height:1px;background:#181b22;"></div>
<div class="abs" style="left:275.4px;top:904.3px;width:9.5px;height:2px;background:#e8b15a;border-radius:1px"></div>
<div class="t" style="left:291.3px;top:899px;font-size:12.5px;color:#7a7f87;letter-spacing:-0.32px;">Idle</div>
<div class="abs" style="left:331.3px;top:904.3px;width:9.5px;height:2px;background:#e0605e;border-radius:1px"></div>
<div class="t" style="left:347.5px;top:899px;font-size:12.5px;color:#7a7f87;letter-spacing:0.07px;">Overprovisioned</div>
<div class="abs" style="left:460.3px;top:904.3px;width:9.5px;height:2px;background:#5b8fc7;border-radius:1px"></div>
<div class="t" style="left:476.6px;top:899px;font-size:12.5px;color:#7a7f87;">Unallocated</div>
<div class="t" style="left:808.7px;top:319px;font-size:9.75px;color:#474c54;letter-spacing:0.57px;">30D FORECAST</div>
<div class="t m" style="left:808.7px;top:337px;font-size:18px;color:#eef0f2;font-weight:700;letter-spacing:-0.74px;">€56.57</div>
<div class="abs" style="left:808px;top:366.3px;width:6px;height:6px;border-radius:3px;background:#e0605e"></div>
<div class="t" style="left:818.4px;top:364px;font-size:10px;color:#e0605e;letter-spacing:0.26px;">Very Low</div>
<div class="t" style="left:808.7px;top:383px;font-size:10px;color:#3fb0a1;letter-spacing:0.3px;">Forecast</div>
<div class="t m" style="left:852.9px;top:379px;font-size:13px;color:#3fb0a1;">→</div>
<div class="t" style="left:1077.8px;top:319px;font-size:9.75px;color:#474c54;letter-spacing:0.38px;">EFFICIENCY</div>
<div class="t m" style="left:1077.8px;top:337px;font-size:18px;color:#e0605e;letter-spacing:-0.48px;">F · 18.14%</div>
<div class="t" style="left:1077.8px;top:364px;font-size:10px;color:#474c54;letter-spacing:0.46px;">€0.45 wasted</div>
<div class="t" style="left:1077.8px;top:383px;font-size:10px;color:#3fb0a1;letter-spacing:0.34px;">Details</div>
<div class="t m" style="left:1113.6px;top:379px;font-size:13px;color:#3fb0a1;">→</div>
<div class="t" style="left:808.7px;top:440px;font-size:9.75px;color:#474c54;letter-spacing:0.53px;">SAVINGS</div>
<div class="t m" style="left:808.7px;top:458px;font-size:18px;color:#5fbf77;font-weight:700;letter-spacing:-0.62px;">€50.59/mo</div>
<div class="t" style="left:808.7px;top:485px;font-size:10px;color:#474c54;letter-spacing:0.43px;">estimated monthly</div>
<div class="t" style="left:808.7px;top:504px;font-size:10px;color:#3fb0a1;letter-spacing:0.39px;">Insights</div>
<div class="t m" style="left:849.1px;top:500px;font-size:13px;color:#3fb0a1;">→</div>
<div class="t" style="left:814.4px;top:561px;font-size:14.75px;color:#eceef0;letter-spacing:-0.02px;-webkit-text-stroke:0.15px #eceef0;">Budgets</div>
<div class="abs" style="left:794px;top:590px;width:521px;height:1px;background:#181b22;"></div>
<div class="t" style="left:1236.2px;top:563px;font-size:12.5px;color:#3fb0a1;letter-spacing:-0.13px;">Manage</div>
<div class="t m" style="left:1284.9px;top:560px;font-size:16px;color:#3fb0a1;">→</div>
<div class="t" style="left:810.0px;top:604px;font-size:11.5px;color:#d0d3d8;letter-spacing:-0.4px;-webkit-text-stroke:0.15px #d0d3d8;">System namespace</div>
<div class="abs" style="left:810px;top:624px;width:489px;height:4px;border-radius:2px;background:#191d24"></div>
<div class="abs" style="left:810px;top:624px;width:109px;height:4px;border-radius:2px;background:#2f9e8f"></div>
<div class="abs" style="left:1201px;top:624px;width:1px;height:4px;background:#3a3f47;"></div>
<div class="abs" style="left:1244px;top:599px;width:55px;height:21px;border-radius:4px;border:1px solid #4f432e;background:#241f19"></div>
<div class="t" style="left:1253.3px;top:604px;font-size:12.5px;color:#e8b15a;letter-spacing:0.21px;">At risk</div>
<div class="t" style="left:814.4px;top:669px;font-size:14.75px;color:#eceef0;letter-spacing:0.05px;-webkit-text-stroke:0.15px #eceef0;">Insights</div>
<div class="abs" style="left:794px;top:698px;width:521px;height:1px;background:#181b22;"></div>
<div class="t" style="left:1238.0px;top:671px;font-size:12.5px;color:#3fb0a1;letter-spacing:-0.05px;">View all</div>
<div class="t m" style="left:1284.9px;top:668px;font-size:16px;color:#3fb0a1;">→</div>
<div class="t" style="left:824.1px;top:710px;font-size:11.5px;color:#d5d8dc;letter-spacing:0.07px;">High Overall Idle Cost</div>
<div class="t m" style="left:824.1px;top:730px;font-size:10px;color:#4fae6a;letter-spacing:-0.27px;">Save €25.49/mo</div>
<div class="abs" style="left:810px;top:719px;width:6px;height:6px;border-radius:3px;background:#5b8fc7"></div>
<div class="t" style="left:824.1px;top:763px;font-size:11.5px;color:#d5d8dc;letter-spacing:0.09px;">All Nodes in a Single Availability Zone</div>
<div class="abs" style="left:810px;top:771.8px;width:6px;height:6px;border-radius:3px;background:#5b8fc7"></div>
<div class="t" style="left:824.1px;top:803px;font-size:11.5px;color:#d5d8dc;letter-spacing:0.07px;">No Spot Instances in Use</div>
<div class="t m" style="left:824.1px;top:823px;font-size:10px;color:#4fae6a;letter-spacing:-0.27px;">Save €25.10/mo</div>
<div class="abs" style="left:810px;top:812px;width:6px;height:6px;border-radius:3px;background:#e8b15a"></div>
<div class="t" style="left:824.1px;top:856px;font-size:11.5px;color:#d5d8dc;letter-spacing:0.03px;">Pods Over-Requesting Resources</div>
<div class="t m" style="left:824.1px;top:876px;font-size:10px;color:#4fae6a;letter-spacing:-0.27px;">Save €13.80/mo</div>
<div class="abs" style="left:810px;top:865px;width:6px;height:6px;border-radius:3px;background:#e8b15a"></div>
<div class="abs" style="left:794px;top:751px;width:521px;height:1px;background:#171a21;"></div>
<div class="abs" style="left:794px;top:791px;width:521px;height:1px;background:#171a21;"></div>
<div class="abs" style="left:794px;top:844px;width:521px;height:1px;background:#171a21;"></div>
<div class="t" style="left:1349.5px;top:322px;font-size:12.5px;color:#474c54;letter-spacing:0.23px;">ABOUT THIS VIEW</div>
<div class="t" style="left:1349.5px;top:340px;font-size:14.75px;color:#f0f2f4;letter-spacing:0.06px;-webkit-text-stroke:0.5px #f0f2f4;">Dashboard</div>
<div class="abs" style="left:1333px;top:369px;width:298px;height:1px;background:#1d2128;"></div>
<div class="t" style="left:1349.5px;top:389px;font-size:13px;color:#8b9098;letter-spacing:-0.19px;">Your operational overview — total spend,</div>
<div class="t" style="left:1349.5px;top:408px;font-size:13px;color:#8b9098;letter-spacing:-0.05px;">efficiency, cost trends and namespace-level</div>
<div class="t" style="left:1349.5px;top:427px;font-size:13px;color:#8b9098;letter-spacing:-0.2px;">breakdowns at a glance.</div>
<div class="abs" style="left:1349.5px;top:459px;width:265.5px;height:1px;background:#181b22;"></div>
<div class="abs" style="left:1349.3px;top:470.1px;width:6px;height:6px;border-radius:3px;background:#3fc0b0"></div>
<div class="t" style="left:1365.4px;top:467px;font-size:13px;color:#d5d8dc;letter-spacing:-0.11px;-webkit-text-stroke:0.15px #d5d8dc;">Cost summary</div>
<div class="t" style="left:1365.4px;top:486px;font-size:13px;color:#8b9098;letter-spacing:-0.25px;">Total, CPU, memory, storage and GPU costs</div>
<div class="t" style="left:1365.4px;top:505px;font-size:13px;color:#8b9098;letter-spacing:-0.02px;">with trend indicators and efficiency grade.</div>
<div class="abs" style="left:1349.3px;top:539.3px;width:6px;height:6px;border-radius:3px;background:#e8b15a"></div>
<div class="t" style="left:1365.4px;top:536px;font-size:13px;color:#d5d8dc;letter-spacing:-0.07px;-webkit-text-stroke:0.15px #d5d8dc;">Idle &amp; waste</div>
<div class="t" style="left:1365.4px;top:555px;font-size:13px;color:#8b9098;letter-spacing:-0.17px;">Overprovisioned and unallocated spend</div>
<div class="t" style="left:1365.4px;top:574px;font-size:13px;color:#8b9098;letter-spacing:-0.04px;">visible in the metric strip and idle trend</div>
<div class="t" style="left:1365.4px;top:593px;font-size:13px;color:#8b9098;letter-spacing:-0.2px;">chart.</div>
<div class="abs" style="left:1349.3px;top:627.7px;width:6px;height:6px;border-radius:3px;background:#5b8fc7"></div>
<div class="t" style="left:1365.4px;top:624px;font-size:13px;color:#d5d8dc;letter-spacing:-0.2px;-webkit-text-stroke:0.15px #d5d8dc;">Weekly movers</div>
<div class="t" style="left:1365.4px;top:643px;font-size:13px;color:#8b9098;letter-spacing:-0.18px;">Namespace cost changes over the last 7</div>
<div class="t" style="left:1365.4px;top:662px;font-size:13px;color:#8b9098;letter-spacing:-0.2px;">days vs the prior 7 days — independent of</div>
<div class="t" style="left:1365.4px;top:681px;font-size:13px;color:#8b9098;letter-spacing:-0.07px;">the time range selector.</div>
<div class="t" style="left:1349.5px;top:716px;font-size:11px;color:#3f444c;letter-spacing:-0.16px;">Spotted a problem or have an idea? Use</div>
<div class="t" style="left:1349.5px;top:732px;font-size:11px;color:#3f444c;letter-spacing:-0.04px;">send feedback to let us know — reports go directly to</div>
<div class="t" style="left:1349.5px;top:748px;font-size:11px;color:#3f444c;letter-spacing:-0.11px;">the CostPilot team.</div>
<div class="t" style="left:1369.2px;top:774px;font-size:13px;color:#c5c8cd;letter-spacing:-0.32px;">Read the docs</div>
<div class="t" style="left:1497.9px;top:774px;font-size:13px;color:#c5c8cd;letter-spacing:-0.23px;">Send feedback</div>
<div class="abs" style="left:1463.3px;top:780px;width:1.5px;height:1.5px;background:#1f232a;"></div>
<div class="t" style="left:275.3px;top:965px;font-size:14.75px;color:#eceef0;letter-spacing:-0.03px;-webkit-text-stroke:0.15px #eceef0;">Namespace costs</div>
<div class="t" style="left:1238.0px;top:967px;font-size:12.5px;color:#3fb0a1;letter-spacing:-0.05px;">View all</div>
<div class="t m" style="left:1284.9px;top:964px;font-size:16px;color:#3fb0a1;">→</div>
<div class="abs" style="left:255px;top:994px;width:1060px;height:1px;background:#181b22;"></div>
<div class="t" style="left:271.2px;top:1007px;font-size:12.5px;color:#474c54;letter-spacing:0.48px;">NAMESPACE</div>
<div class="t" style="left:574.6px;top:1007px;font-size:12.5px;color:#474c54;letter-spacing:-0.08px;">COST</div>
<div class="t" style="left:767.8px;top:1007px;font-size:12.5px;color:#474c54;letter-spacing:-0.1px;">IDLE</div>
<div class="t" style="left:905.6px;top:1007px;font-size:12.5px;color:#474c54;letter-spacing:0.17px;">EFFICIENCY</div>
<div class="t" style="left:1125.4px;top:1007px;font-size:12.5px;color:#474c54;letter-spacing:0.36px;">TREND</div>
<div class="t" style="left:1202.9px;top:1007px;font-size:12.5px;color:#474c54;letter-spacing:0.48px;">SHARE</div>
<svg class="abs" style="left:16px;top:114px;color:#3fb0a1" width="16" height="16" viewBox="0 0 16 16" fill="none" stroke="#3fb0a1" stroke-width="1.30" stroke-linecap="round" stroke-linejoin="round"><path d="M2.6 7.4v6.1h10.8V7.4M1.4 8.1 8 2l6.6 6.1M6.5 13.5V9.9h3v3.6"/></svg>
<svg class="abs" style="left:16px;top:148px;color:#8b9098" width="16" height="16" viewBox="0 0 16 16" fill="none" stroke="#8b9098" stroke-width="1.30" stroke-linecap="round" stroke-linejoin="round"><path d="M1.2 12.3 6 7.5l2.6 2.6 6-6M10.7 4h4v4"/></svg>
<svg class="abs" style="left:16px;top:227px;color:#8b9098" width="16" height="16" viewBox="0 0 16 16" fill="none" stroke="#8b9098" stroke-width="1.30" stroke-linecap="round" stroke-linejoin="round"><path d="M8 14.3a5.7 5.7 0 0 1-5.7-5.7c0-1.9 1-3.6 2.4-4.7l1.6 2C6.7 4.1 7.5 2.5 8.6 1.6c2.7 1.8 5.1 4 5.1 7A5.7 5.7 0 0 1 8 14.3z"/></svg>
<svg class="abs" style="left:16px;top:261px;color:#8b9098" width="16" height="16" viewBox="0 0 16 16" fill="none" stroke="#8b9098" stroke-width="1.30" stroke-linecap="round" stroke-linejoin="round"><rect x="1.3" y="3.4" width="13.4" height="7.8" rx="1"/><circle cx="8" cy="7.3" r="1.9"/><path d="M3.3 7.3h1.1M11.6 7.3h1.1M1.6 13.1l12.2.9"/></svg>
<svg class="abs" style="left:16px;top:295px;color:#8b9098" width="16" height="16" viewBox="0 0 16 16" fill="none" stroke="#8b9098" stroke-width="1.30" stroke-linecap="round" stroke-linejoin="round"><rect x="2.3" y="2.3" width="11.4" height="11.4" rx="1.6"/><path d="M4.7 11.3V9.4h2.1V7.5h2.1V5.4h2.3v5.9z" fill="currentColor" stroke-width="0.6"/></svg>
<svg class="abs" style="left:16px;top:329px;color:#8b9098" width="16" height="16" viewBox="0 0 16 16" fill="none" stroke="#8b9098" stroke-width="1.30" stroke-linecap="round" stroke-linejoin="round"><circle cx="8" cy="8" r="6.2"/><path d="M8 4.9v3.7"/><circle cx="8" cy="11" r="0.55" fill="currentColor" stroke-width="0.6"/></svg>
<svg class="abs" style="left:16px;top:363px;color:#8b9098" width="16" height="16" viewBox="0 0 16 16" fill="none" stroke="#8b9098" stroke-width="1.30" stroke-linecap="round" stroke-linejoin="round"><path d="M1.9 2.5v5.2l6.8 6.8a1 1 0 0 0 1.4 0l4.4-4.4a1 1 0 0 0 0-1.4L7.7 1.9H2.5a.6.6 0 0 0-.6.6z"/><circle cx="4.9" cy="4.9" r="0.5" fill="currentColor" stroke-width="0.5"/></svg>
<svg class="abs" style="left:16px;top:397px;color:#8b9098" width="16" height="16" viewBox="0 0 16 16" fill="none" stroke="#8b9098" stroke-width="1.30" stroke-linecap="round" stroke-linejoin="round"><path d="M5.7 11.5a5.2 5.2 0 1 1 4.6 0v.9H5.7zM6.3 14.3h3.4M8 12.2V9M6.7 7.7 8 9l1.3-1.3"/></svg>
<svg class="abs" style="left:16px;top:431px;color:#8b9098" width="16" height="16" viewBox="0 0 16 16" fill="none" stroke="#8b9098" stroke-width="1.30" stroke-linecap="round" stroke-linejoin="round"><path d="M6.9 2.900 1.500 12.200a1.200 1.200 0 0 0 1.100 1.800h10.800a1.200 1.200 0 0 0 1.100-1.800L9.100 2.900a1.250 1.250 0 0 0-2.200 0zM8 6.800v3"/><circle cx="8" cy="11.7" r="0.5" fill="currentColor" stroke-width="0.6"/></svg>
<svg class="abs" style="left:16px;top:510px;color:#8b9098" width="16" height="16" viewBox="0 0 16 16" fill="none" stroke="#8b9098" stroke-width="1.30" stroke-linecap="round" stroke-linejoin="round"><path d="M1.3 6.4c0-2.1 1.7-3.7 3.7-3.7h6c2 0 3.7 1.6 3.7 3.7z"/><rect x="1.3" y="6.4" width="13.4" height="3.6" rx="0.8"/><rect x="1.3" y="10" width="13.4" height="3.6" rx="1"/></svg>
<svg class="abs" style="left:16px;top:589px;color:#8b9098" width="16" height="16" viewBox="0 0 16 16" fill="none" stroke="#8b9098" stroke-width="1.30" stroke-linecap="round" stroke-linejoin="round"><path d="M2.2 11.7c1.100-1.600 1.400-3.300 1.400-5.200a4.400 4.400 0 0 1 8.800 0c0 1.900.300 3.600 1.400 5.200zM6.200 12.100a1.900 1.900 0 0 0 3.600 0"/></svg>
<svg class="abs" style="left:16px;top:623px;color:#8b9098" width="16" height="16" viewBox="0 0 16 16" fill="none" stroke="#8b9098" stroke-width="1.30" stroke-linecap="round" stroke-linejoin="round"><path d="M9.9 1.5 3.1 8.8h4.3l-1.3 5.7 6.8-7.3H8.6z"/></svg>
<svg class="abs" style="left:16px;top:657px;color:#8b9098" width="16" height="16" viewBox="0 0 16 16" fill="none" stroke="#8b9098" stroke-width="1.30" stroke-linecap="round" stroke-linejoin="round"><circle cx="8" cy="8" r="2.3"/><path d="M14.42 6.98 L14.42 9.02 L12.96 9.19 L12.35 10.66 L13.26 11.82 L11.82 13.26 L10.66 12.35 L9.19 12.96 L9.02 14.42 L6.98 14.42 L6.81 12.96 L5.34 12.35 L4.18 13.26 L2.74 11.82 L3.65 10.66 L3.04 9.19 L1.58 9.02 L1.58 6.98 L3.04 6.81 L3.65 5.34 L2.74 4.18 L4.18 2.74 L5.34 3.65 L6.81 3.04 L6.98 1.58 L9.02 1.58 L9.19 3.04 L10.66 3.65 L11.82 2.74 L13.26 4.18 L12.35 5.34 L12.96 6.81Z"/></svg>
<svg class="abs" style="left:14.6px;top:985.7px;color:#565b63" width="17" height="17" viewBox="0 0 16 16" fill="none" stroke="#565b63" stroke-width="1.22" stroke-linecap="round" stroke-linejoin="round"><path d="M10.2 3 5.2 8l5 5"/></svg>
<svg class="abs" style="left:1150.3px;top:28px;color:#8b9098" width="13" height="13" viewBox="0 0 16 16" fill="none" stroke="#8b9098" stroke-width="1.35" stroke-linecap="round" stroke-linejoin="round"><path d="M8 14.3a5.7 5.7 0 0 1-5.7-5.7c0-1.9 1-3.6 2.4-4.7l1.6 2C6.7 4.1 7.5 2.5 8.6 1.6c2.7 1.8 5.1 4 5.1 7A5.7 5.7 0 0 1 8 14.3z"/></svg>
<svg class="abs" style="left:1344.6px;top:27.2px;color:#8b9098" width="14" height="14" viewBox="0 0 16 16" fill="none" stroke="#8b9098" stroke-width="1.31" stroke-linecap="round" stroke-linejoin="round"><path d="M1.3 6.4c0-2.1 1.7-3.7 3.7-3.7h6c2 0 3.7 1.6 3.7 3.7z"/><rect x="1.3" y="6.4" width="13.4" height="3.6" rx="0.8"/><rect x="1.3" y="10" width="13.4" height="3.6" rx="1"/></svg>
<svg class="abs" style="left:1433.6px;top:28.3px;color:#6b7078" width="11.5" height="11.5" viewBox="0 0 16 16" fill="none" stroke="#6b7078" stroke-width="1.53" stroke-linecap="round" stroke-linejoin="round"><path d="M3 5.8 8 10.8 13 5.8"/></svg>
<svg class="abs" style="left:1477.2px;top:27px;color:#8b9098" width="14" height="14" viewBox="0 0 16 16" fill="none" stroke="#8b9098" stroke-width="1.31" stroke-linecap="round" stroke-linejoin="round"><circle cx="8" cy="8" r="6.3"/><path d="M8 4.3V8h3.4"/></svg>
<svg class="abs" style="left:1623px;top:26px;color:#8b9098" width="16" height="16" viewBox="0 0 16 16" fill="none" stroke="#8b9098" stroke-width="1.20" stroke-linecap="round" stroke-linejoin="round"><path d="M2.2 11.7c1.100-1.600 1.400-3.300 1.400-5.200a4.400 4.400 0 0 1 8.800 0c0 1.900.300 3.600 1.400 5.200zM6.200 12.100a1.900 1.900 0 0 0 3.600 0"/></svg>
<svg class="abs" style="left:841px;top:118px;color:#474c54" width="10" height="10" viewBox="0 0 16 16" fill="none" stroke="#474c54" stroke-width="1.60" stroke-linecap="round" stroke-linejoin="round"><path d="M12.6 3.8H3.2M3.4 11.9h9.4"/><path d="M4.7 1.1.9 3.8l3.8 2.700zM11.300 9.200l3.800 2.700-3.800 2.700z" fill="currentColor" stroke-width="0.8"/></svg>
<svg class="abs" style="left:1185.5px;top:118px;color:#474c54" width="10" height="10" viewBox="0 0 16 16" fill="none" stroke="#474c54" stroke-width="1.60" stroke-linecap="round" stroke-linejoin="round"><path d="M12.6 3.8H3.2M3.4 11.9h9.4"/><path d="M4.7 1.1.9 3.8l3.8 2.700zM11.300 9.200l3.800 2.700-3.800 2.700z" fill="currentColor" stroke-width="0.8"/></svg>
<svg class="abs" style="left:675.6px;top:321.3px;color:#474c54" width="10" height="10" viewBox="0 0 16 16" fill="none" stroke="#474c54" stroke-width="1.60" stroke-linecap="round" stroke-linejoin="round"><path d="M12.6 3.8H3.2M3.4 11.9h9.4"/><path d="M4.7 1.1.9 3.8l3.8 2.700zM11.300 9.200l3.800 2.700-3.800 2.700z" fill="currentColor" stroke-width="0.8"/></svg>
<svg class="abs" style="left:1348.5px;top:774px;color:#c5c8cd" width="15" height="15" viewBox="0 0 16 16" fill="none" stroke="#c5c8cd" stroke-width="1.28" stroke-linecap="round" stroke-linejoin="round"><path d="M8 4.3c0-1 .9-1.8 2-1.8h4.4v9.8H10c-1.1 0-2 .8-2 1.8 0-1-.9-1.800-2-1.800H1.600V2.500H6c1.100 0 2 .800 2 1.800zM8 4.300v9.800"/></svg>
<svg class="abs" style="left:1477.5px;top:773.5px;color:#c5c8cd" width="15" height="15" viewBox="0 0 16 16" fill="none" stroke="#c5c8cd" stroke-width="1.28" stroke-linecap="round" stroke-linejoin="round"><circle cx="8" cy="8" r="6.2"/><path d="M8 4.9v3.7"/><circle cx="8" cy="11" r="0.55" fill="currentColor" stroke-width="0.6"/></svg>
<svg class="abs" style="left:14px;top:12px" width="44" height="48" viewBox="14 12 44 48" fill="none" stroke-linecap="round"><path d="M28.5 28.1h0M47.9 40.7h0M26.4 34.3h0M26.5 30.2h0M34.2 44.3h0M26.4 35.4h0M29.4 41.4h0M28.1 28.9h0M47.1 41.8h0M33.5 22.9h0M32.5 43.4h0M26.5 33.4h0M28.4 38.5h0M30.6 24.0h0M27.9 28.7h0M27.4 29.8h0M40.7 45.0h0M44.6 43.1h0M34.5 21.8h0M29.5 40.0h0M27.8 36.4h0M33.5 23.0h0M27.2 30.1h0M33.6 22.8h0M36.4 44.7h0M42.1 44.5h0M33.8 22.7h0M30.7 41.3h0M30.5 25.4h0M38.1 44.5h0M46.0 42.6h0M34.3 44.3h0M27.5 29.8h0M28.7 25.8h0M34.6 22.6h0M32.2 42.8h0M37.7 45.2h0M26.6 30.7h0M34.1 44.5h0M41.6 44.7h0M29.7 25.4h0M29.6 26.2h0M28.8 39.7h0M26.8 29.2h0M27.3 31.1h0M31.2 42.6h0M27.2 33.4h0M39.7 45.5h0M32.9 44.1h0M28.4 39.2h0M27.2 33.2h0M32.6 43.7h0M32.8 43.9h0M47.2 41.1h0M32.9 23.3h0M33.2 44.2h0M37.7 45.5h0M28.7 26.4h0M35.8 44.8h0M29.3 39.8h0M46.5 41.9h0M29.2 26.0h0M33.7 23.0h0M32.5 43.8h0M27.2 32.1h0M31.3 42.8h0M34.7 44.4h0M31.4 23.3h0M46.1 42.7h0M46.8 41.8h0M26.8 35.0h0M45.5 43.4h0M26.9 34.5h0M29.9 24.7h0M27.2 29.9h0M28.0 36.8h0M37.0 44.9h0M42.3 45.0h0M36.4 45.3h0M28.1 39.0h0M44.3 43.4h0M28.2 28.5h0M27.0 32.5h0M32.0 42.7h0M27.1 36.1h0M33.1 43.3h0M29.0 41.1h0M42.2 45.1h0M42.9 44.5h0M42.1 44.5h0M28.0 28.0h0M35.3 44.3h0M27.2 28.9h0M32.8 23.1h0M39.6 45.5h0M36.3 44.6h0M28.5 28.3h0M40.0 45.5h0M33.5 22.2h0M27.8 37.1h0M33.7 44.4h0" stroke="#fff" stroke-opacity="0.7" stroke-width="0.9"/><path d="M45.3 44.4h0M25.0 27.9h0M33.9 46.0h0M26.6 24.8h0M24.7 37.6h0M31.1 44.1h0M34.7 47.1h0M32.9 46.3h0M31.2 45.6h0M37.9 47.1h0M26.2 39.9h0M38.8 47.5h0M25.7 30.8h0M35.3 47.4h0M35.8 45.6h0M30.1 22.9h0M26.3 37.9h0M30.2 45.1h0M29.0 42.7h0M40.5 46.2h0M43.5 46.8h0M25.4 28.6h0M25.5 28.3h0M26.8 38.5h0M46.6 44.1h0M28.0 41.5h0M26.3 40.1h0M29.2 23.5h0M24.5 35.2h0M30.7 45.4h0M30.2 43.4h0M34.1 20.9h0M25.0 35.8h0M46.2 45.7h0M31.1 44.9h0M31.3 44.9h0M28.3 23.5h0M46.3 44.3h0M28.0 41.8h0M41.2 46.2h0M46.9 43.7h0M25.6 32.9h0M29.9 21.9h0M34.8 21.1h0M24.6 34.5h0M42.7 45.2h0M27.5 41.0h0M35.1 46.9h0M46.2 43.3h0M29.1 22.7h0M27.3 26.4h0M27.0 27.4h0M36.0 46.1h0M46.0 44.2h0M26.2 40.0h0M28.7 43.7h0M26.1 37.4h0M25.1 28.4h0M27.7 23.5h0M36.9 47.3h0M33.2 19.7h0M29.0 24.1h0M50.0 42.2h0M26.8 37.4h0M42.2 45.8h0M32.1 20.4h0M44.7 45.0h0M40.5 46.4h0M26.6 39.3h0M27.1 39.0h0M27.9 40.3h0M24.6 34.3h0M30.4 45.0h0M29.8 44.4h0M45.9 44.0h0M41.4 45.8h0M35.0 45.2h0M46.4 43.9h0M25.6 34.9h0M26.5 37.5h0M28.4 42.2h0M38.3 46.0h0M26.3 37.9h0M26.8 38.7h0M26.5 41.3h0M27.3 39.6h0M36.2 47.5h0M42.7 45.5h0M32.3 44.0h0M48.9 43.6h0M33.8 46.3h0M34.7 19.9h0M27.2 38.6h0M25.9 35.3h0M49.5 42.6h0M43.1 46.4h0M46.5 44.7h0M42.7 47.3h0M42.3 47.1h0M27.7 25.1h0M26.7 40.9h0M28.8 43.8h0M24.7 32.8h0M26.1 39.4h0M28.7 23.0h0M44.0 45.4h0M29.3 24.6h0M31.3 45.7h0M42.0 46.2h0M44.3 45.2h0M42.7 46.2h0M32.0 22.5h0M28.5 25.5h0M26.6 27.9h0M28.3 40.2h0M31.3 43.8h0M25.8 39.9h0M48.6 43.8h0M27.4 26.3h0M39.6 47.2h0M26.1 30.9h0M37.1 46.3h0M31.5 45.0h0M26.1 28.1h0M26.5 38.5h0M26.2 31.5h0M31.3 22.3h0M27.6 42.9h0M24.4 31.3h0M27.5 25.5h0M27.6 42.0h0M28.4 24.6h0M29.6 41.9h0M26.1 36.1h0M46.0 45.4h0M30.3 23.3h0M26.0 27.0h0M27.3 27.2h0M31.7 20.4h0M33.8 45.9h0M26.3 30.5h0" stroke="#fff" stroke-opacity="0.45" stroke-width="0.8"/><path d="M23.7 25.9h0M23.7 46.0h0M47.8 45.9h0M32.4 50.4h0M32.8 19.1h0M27.8 48.5h0M21.8 34.6h0M44.7 53.2h0M49.6 45.6h0M31.8 48.4h0M23.8 31.4h0M26.9 45.4h0M48.4 46.7h0M20.6 38.2h0M24.5 43.1h0M26.9 21.9h0M39.8 49.0h0M36.1 48.3h0M23.5 27.5h0M22.5 29.2h0M42.0 50.3h0M23.5 38.5h0M37.7 49.0h0M24.0 35.2h0M23.1 37.3h0M35.8 55.0h0M47.4 45.2h0M27.8 45.1h0M36.0 48.5h0M22.1 28.8h0M46.1 48.3h0M31.9 19.1h0M40.8 51.4h0M49.3 45.3h0M22.3 40.4h0M25.2 41.9h0M26.2 43.4h0M30.4 53.3h0M25.0 43.9h0M25.3 26.2h0M23.2 37.1h0M46.1 48.9h0M21.2 29.5h0M29.6 46.9h0M40.0 49.2h0M28.7 46.4h0M31.1 51.6h0M35.8 51.5h0M26.8 42.4h0M48.7 48.7h0M29.8 20.1h0M21.2 35.2h0M33.1 50.9h0M39.5 50.8h0M31.6 19.2h0M27.5 46.3h0M27.0 43.9h0M25.1 46.9h0M27.7 50.7h0M43.8 49.0h0M50.3 45.5h0M47.0 45.8h0M19.7 37.6h0M34.0 19.2h0M25.6 24.9h0M33.7 49.6h0M23.5 30.2h0M26.1 41.4h0M25.2 39.9h0M24.0 39.8h0M22.3 38.6h0M18.9 35.4h0M31.6 47.4h0M25.7 23.3h0M29.4 45.0h0M38.0 51.4h0M49.1 50.3h0M23.5 25.7h0M30.4 45.4h0M24.0 42.3h0M23.8 29.8h0M41.7 53.2h0M24.1 41.3h0M21.0 42.3h0M48.2 46.7h0M48.5 48.4h0M30.2 20.8h0M39.3 52.6h0M39.4 48.9h0M20.2 32.8h0M46.6 48.9h0M21.5 30.5h0M24.0 49.0h0M37.8 49.6h0M45.7 51.2h0M37.9 53.2h0M25.2 25.1h0M38.3 51.8h0M29.9 53.3h0M19.9 30.6h0M32.5 49.1h0M30.8 48.5h0M45.0 49.9h0M22.1 39.3h0M33.2 19.3h0M22.1 34.8h0M26.8 24.3h0M19.8 37.5h0M22.8 37.0h0M23.2 45.2h0M36.2 51.6h0M27.1 22.5h0M44.8 49.0h0M34.3 50.6h0M34.2 49.0h0M21.5 36.8h0M49.3 44.2h0M30.7 47.7h0M34.4 49.5h0M50.4 43.8h0M50.3 44.0h0M22.6 32.4h0M40.5 54.6h0M23.2 28.5h0M30.6 49.9h0M25.5 45.3h0M30.8 46.9h0M22.8 26.9h0M24.6 27.3h0M26.3 41.7h0M38.0 49.6h0M23.9 34.8h0M24.4 39.9h0M34.5 48.9h0M43.3 47.9h0M23.1 33.2h0M23.7 36.5h0M50.5 45.7h0M41.0 49.4h0M21.8 33.9h0M25.3 26.8h0M46.2 51.3h0M24.4 29.1h0M32.3 49.3h0M31.4 53.2h0M27.4 47.1h0M24.3 41.5h0M24.2 36.9h0M47.5 45.1h0M49.7 47.0h0M41.6 51.7h0M41.7 49.4h0M46.8 47.0h0M34.3 48.9h0M40.8 47.7h0M21.4 31.3h0M48.7 50.1h0M25.8 42.0h0M20.7 44.6h0M21.6 33.7h0M26.7 24.1h0M36.7 54.7h0M19.7 31.0h0M51.0 47.0h0M46.0 49.8h0M30.4 19.4h0M25.6 41.0h0M24.2 46.9h0M23.2 28.1h0M33.8 48.2h0M25.6 47.9h0M20.7 41.4h0M49.5 49.4h0M22.9 33.2h0M20.9 33.9h0M24.4 48.0h0M28.1 44.4h0M46.3 47.3h0M51.5 45.0h0M23.9 44.6h0M28.0 48.1h0M23.2 44.6h0M28.6 48.3h0M46.4 50.3h0M30.6 20.7h0M27.3 50.7h0M38.7 49.7h0M49.7 50.1h0" stroke="#fff" stroke-opacity="0.3" stroke-width="0.75"/></svg>
</div>
</body>
</html>
